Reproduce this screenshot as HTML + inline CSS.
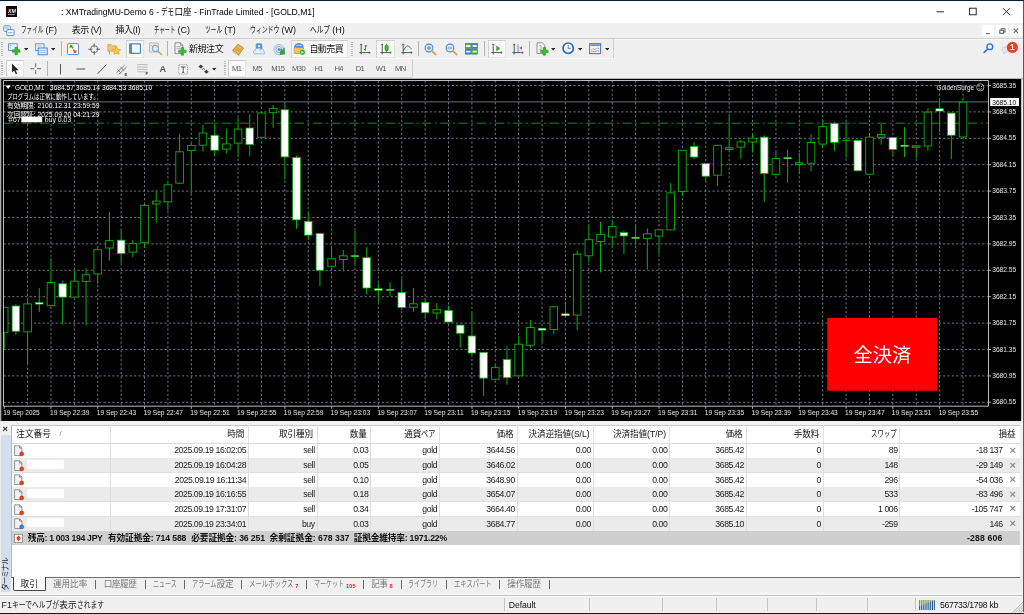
<!DOCTYPE html>
<html lang="ja"><head><meta charset="utf-8"><title>GOLD,M1</title>
<style>
html,body{margin:0;padding:0;}
body{width:1024px;height:614px;overflow:hidden;background:#f0f0f0;position:relative;font-family:"Liberation Sans","Noto Sans CJK JP",sans-serif;}
#w{position:absolute;left:0;top:0;width:1024px;height:614px;overflow:hidden;will-change:transform;}
#w>div,#w>svg,.t{position:absolute;}
.t{white-space:nowrap;}
div{box-sizing:border-box;}
</style></head>
<body>
<div id="w">
<div style="left:0px;top:0px;width:1024px;height:1.35px;background:#071a3a;"></div>
<div style="left:0px;top:1.3px;width:1024px;height:22px;background:#ffffff;"></div>
<div style="left:5.9px;top:5.9px;width:11.6px;height:11.4px;background:#0a0a0a;"></div>
<span class="t" style="top:7.56px;font-size:5.2px;line-height:7.28px;color:#f2f2f2;font-weight:bold;left:11.9px;transform:translateX(-50%);font-style:italic;">XM</span>
<div style="left:8.4px;top:14px;width:6.8px;height:0.7px;background:#8a8a8a;"></div>
<div style="left:7.6px;top:9.4px;width:1.2px;height:3.2px;background:#b01818;transform:skewX(-14deg);"></div>
<span class="t" style="top:6.28px;font-size:8.6px;line-height:12.04px;color:#000;left:61px;">: XMTradingMU-Demo 6 - <span style="display:inline-block;width:13.00px;height:12.04px;vertical-align:top;letter-spacing:0"><span style="display:inline-block;transform:scaleX(0.756);transform-origin:0 50%">デモ</span></span>口座 - FinTrade Limited - [GOLD,M1]</span>
<svg style="left:930px;top:2px" width="90" height="20" viewBox="930 2 90 20"><g stroke="#111" stroke-width="0.9" fill="none"><path d="M936.5 11.8h7.5"/><rect x="969.6" y="8.2" width="6.6" height="6.6"/><path d="M1003 8.2l7 7M1010 8.2l-7 7"/></g></svg>
<div style="left:0px;top:23.3px;width:1024px;height:14.9px;background:#f0f0f0;"></div>
<div style="left:0px;top:37.7px;width:1024px;height:0.8px;background:#d2d2d2;"></div>
<div style="left:0px;top:38.5px;width:1024px;height:0.6px;background:#f8f8f8;"></div>
<svg style="left:2.5px;top:24.6px" width="12" height="12" viewBox="0 0 12 12"><rect x="0.8" y="0.8" width="6.6" height="5.6" rx="0.8" fill="#eaf2fb" stroke="#5b8fd0" stroke-width="0.9"/><rect x="3.8" y="4.6" width="7.2" height="6" rx="0.8" fill="#f4f8fd" stroke="#4a82c8" stroke-width="0.9"/><path d="M2 3h4M5.2 7.6h4.4" stroke="#7aa5da" stroke-width="0.8"/></svg>
<span class="t" style="top:24.3px;font-size:9px;line-height:12.6px;color:#111;left:20.6px;"><span style="display:inline-block;width:22.39px;height:12.6px;vertical-align:top;letter-spacing:0"><span style="display:inline-block;transform:scaleX(0.622);transform-origin:0 50%">ファイル</span></span> (F)</span>
<span class="t" style="top:24.3px;font-size:9px;line-height:12.6px;color:#111;left:71.8px;letter-spacing:-0.517px;">表示 (V)</span>
<span class="t" style="top:24.3px;font-size:9px;line-height:12.6px;color:#111;left:115.5px;letter-spacing:-0.4px;">挿入(I)</span>
<span class="t" style="top:24.3px;font-size:9px;line-height:12.6px;color:#111;left:153.8px;"><span style="display:inline-block;width:21.28px;height:12.6px;vertical-align:top;letter-spacing:0"><span style="display:inline-block;transform:scaleX(0.591);transform-origin:0 50%">チャート</span></span> (C)</span>
<span class="t" style="top:24.3px;font-size:9px;line-height:12.6px;color:#111;left:204.5px;"><span style="display:inline-block;width:17.20px;height:12.6px;vertical-align:top;letter-spacing:0"><span style="display:inline-block;transform:scaleX(0.637);transform-origin:0 50%">ツール</span></span> (T)</span>
<span class="t" style="top:24.3px;font-size:9px;line-height:12.6px;color:#111;left:249.5px;"><span style="display:inline-block;width:29.52px;height:12.6px;vertical-align:top;letter-spacing:0"><span style="display:inline-block;transform:scaleX(0.656);transform-origin:0 50%">ウィンドウ</span></span> (W)</span>
<span class="t" style="top:24.3px;font-size:9px;line-height:12.6px;color:#111;left:309.8px;"><span style="display:inline-block;width:20.01px;height:12.6px;vertical-align:top;letter-spacing:0"><span style="display:inline-block;transform:scaleX(0.741);transform-origin:0 50%">ヘルプ</span></span> (H)</span>
<div style="left:982.2px;top:25px;width:11.6px;height:11.4px;background:#fff;"></div>
<div style="left:996.2px;top:25px;width:11.6px;height:11.4px;background:#fff;"></div>
<div style="left:1010.2px;top:25px;width:11.6px;height:11.4px;background:#fff;"></div>
<svg style="left:980px;top:24px" width="44" height="14" viewBox="980 24 44 14"><g stroke="#50607f" stroke-width="1.05" fill="none"><path d="M985.8 33.6h4"/><rect x="999.8" y="30.3" width="3.6" height="3"/><path d="M1001.2 30.3v-1.6h3.8v3.2h-1.6"/><path d="M1013.8 28.6l4.2 4.2M1018 28.6l-4.2 4.2"/></g></svg>
<div style="left:0px;top:38.8px;width:613.4px;height:19.4px;background:#f0f0f0;"></div>
<div style="left:0px;top:57.6px;width:613.4px;height:0.8px;background:#d6d6d6;"></div>
<div style="left:613px;top:38.8px;width:0.8px;height:19.4px;background:#d0d0d0;"></div>
<div style="left:0px;top:58.4px;width:613.4px;height:0.7px;background:#fafafa;"></div>
<div style="left:0px;top:76.6px;width:412px;height:0.8px;background:#d6d6d6;"></div>
<div style="left:411.6px;top:59px;width:0.8px;height:18px;background:#d0d0d0;"></div>
<div style="left:1.4px;top:41.5px;width:1.8px;height:15px;background:repeating-linear-gradient(#bdbdbd 0 1.1px,transparent 1.1px 2.2px)"></div>
<div style="left:1.4px;top:61.3px;width:1.8px;height:15px;background:repeating-linear-gradient(#bdbdbd 0 1.1px,transparent 1.1px 2.2px)"></div>
<div style="left:351.4px;top:41.5px;width:1.8px;height:15px;background:repeating-linear-gradient(#bdbdbd 0 1.1px,transparent 1.1px 2.2px)"></div>
<div style="left:223.8px;top:61.3px;width:1.8px;height:15px;background:repeating-linear-gradient(#bdbdbd 0 1.1px,transparent 1.1px 2.2px)"></div>
<div style="left:60.6px;top:41px;width:0.9px;height:15.2px;background:#b4b4b4;"></div>
<div style="left:167.1px;top:41px;width:0.9px;height:15.2px;background:#b4b4b4;"></div>
<div style="left:417.90000000000003px;top:41px;width:0.9px;height:15.2px;background:#b4b4b4;"></div>
<div style="left:484.0px;top:41px;width:0.9px;height:15.2px;background:#b4b4b4;"></div>
<div style="left:529.0px;top:41px;width:0.9px;height:15.2px;background:#b4b4b4;"></div>
<div style="left:47.2px;top:61px;width:0.9px;height:15.2px;background:#b4b4b4;"></div>
<div style="left:125.6px;top:40px;width:18.8px;height:17.6px;background:#f9fbf9;border:0.8px solid #e4e4e4;border-top-color:#cfcfcf;border-left-color:#cfcfcf"></div>
<div style="left:291px;top:40px;width:56.6px;height:17.6px;background:#f9fbf9;border:0.8px solid #e4e4e4;border-top-color:#cfcfcf;border-left-color:#cfcfcf"></div>
<div style="left:376.4px;top:40px;width:18.6px;height:17.6px;background:#f9fbf9;border:0.8px solid #e4e4e4;border-top-color:#cfcfcf;border-left-color:#cfcfcf"></div>
<div style="left:487.5px;top:40px;width:18.5px;height:17.6px;background:#f9fbf9;border:0.8px solid #e4e4e4;border-top-color:#cfcfcf;border-left-color:#cfcfcf"></div>
<div style="left:5.6px;top:59.8px;width:18.2px;height:17.6px;background:#f9fbf9;border:0.8px solid #e4e4e4;border-top-color:#cfcfcf;border-left-color:#cfcfcf"></div>
<div style="left:228px;top:59.8px;width:17.6px;height:17.6px;background:#f9fbf9;border:0.8px solid #e4e4e4;border-top-color:#cfcfcf;border-left-color:#cfcfcf"></div>
<svg style="left:23.8px;top:48.2px" width="4.4" height="2.6" viewBox="0 0 4.4 2.6"><path d="M0 0h4.4L2.2 2.6z" fill="#222"/></svg>
<svg style="left:50.8px;top:48.2px" width="4.4" height="2.6" viewBox="0 0 4.4 2.6"><path d="M0 0h4.4L2.2 2.6z" fill="#222"/></svg>
<svg style="left:550.8px;top:48.2px" width="4.4" height="2.6" viewBox="0 0 4.4 2.6"><path d="M0 0h4.4L2.2 2.6z" fill="#222"/></svg>
<svg style="left:577.8px;top:48.2px" width="4.4" height="2.6" viewBox="0 0 4.4 2.6"><path d="M0 0h4.4L2.2 2.6z" fill="#222"/></svg>
<svg style="left:604.8px;top:48.2px" width="4.4" height="2.6" viewBox="0 0 4.4 2.6"><path d="M0 0h4.4L2.2 2.6z" fill="#222"/></svg>
<svg style="left:212.20000000000002px;top:68.2px" width="4.4" height="2.6" viewBox="0 0 4.4 2.6"><path d="M0 0h4.4L2.2 2.6z" fill="#222"/></svg>
<svg style="left:8px;top:42.5px" width="14" height="14" viewBox="0 0 14 14"><rect x="0.6" y="0.8" width="8.6" height="6.6" fill="#f2f7fd" stroke="#4f86cc" stroke-width="0.9"/><path d="M1.6 2.6h2M1.6 4.6h1.4" stroke="#7aa5da" stroke-width="0.7"/><path d="M4.4 6.8h2.6v-2.6h2.4v2.6h2.6v2.4h-2.6v2.6h-2.4v-2.6h-2.6z" fill="#2fc02f" stroke="#158a15" stroke-width="0.5"/></svg>
<svg style="left:35px;top:42.5px" width="14" height="14" viewBox="0 0 14 14"><rect x="0.6" y="0.8" width="8.4" height="6.8" fill="#f2f7fd" stroke="#5f8fd0" stroke-width="0.9"/><rect x="3.2" y="5" width="9" height="6.8" fill="#e6effa" stroke="#3f78c4" stroke-width="0.9"/><path d="M1.8 3h5M4.4 7.4h6.4M4.4 9.4h6.4" stroke="#7aa5da" stroke-width="0.7"/></svg>
<svg style="left:67px;top:43px" width="12.4" height="12.4" viewBox="0 0 12.4 12.4"><rect x="0.6" y="0.6" width="11" height="11" rx="1" fill="#fff" stroke="#4a8ad8" stroke-width="1"/><path d="M4.4 2.6l2.2 2.2-1 1-2.2-2.2z" fill="#22a022"/><path d="M2.6 5.4l0.4-3.2 3.2-0.4z" fill="#22a022"/><path d="M7.8 9.4l-2.2-2.2 1-1 2.2 2.2z" fill="#e0401a"/><path d="M9.6 6.6l-0.4 3.2-3.2 0.4z" fill="#e0401a"/></svg>
<svg style="left:88px;top:43px" width="12.4" height="12.4" viewBox="0 0 12.4 12.4"><circle cx="6.2" cy="6.2" r="3.6" fill="none" stroke="#666" stroke-width="0.9"/><path d="M6.2 0.4v4M6.2 8v4M0.4 6.2h4M8 6.2h4" stroke="#555" stroke-width="0.9"/></svg>
<svg style="left:106.6px;top:42.4px" width="14.4" height="14" viewBox="0 0 14.4 14"><path d="M0.8 2.6h3.6l1 1.2h4v5.4H0.8z" fill="#f1c66a" stroke="#c8963a" stroke-width="0.6"/><path d="M2.4 9.2v3" stroke="#b98a3a" stroke-width="0.8"/><path d="M9.4 4.6l1.3 2.7 2.9 0.4-2.1 2 0.5 2.9-2.6-1.4-2.6 1.4 0.5-2.9-2.1-2 2.9-0.4z" fill="#f7cf3a" stroke="#d49a1a" stroke-width="0.6"/></svg>
<svg style="left:128.6px;top:42.8px" width="12" height="12.6" viewBox="0 0 12 12.6"><rect x="0.6" y="0.8" width="10.8" height="9.6" rx="0.8" fill="#fafcff" stroke="#3f86d8" stroke-width="1.2"/><rect x="0.6" y="0.8" width="2.4" height="9.6" fill="#4a8fdc"/><path d="M1.2 3.4h1.2M1.2 6h1.2" stroke="#e04a2a" stroke-width="0.7"/></svg>
<svg style="left:149px;top:42.4px" width="13.4" height="14" viewBox="0 0 13.4 14"><rect x="0.8" y="1" width="8.4" height="9" fill="#f6f0e4" stroke="#a8a090" stroke-width="0.7"/><path d="M2 3.2l1.6 1 1.6-1.4 1.8 1.2" stroke="#6a8fc0" stroke-width="0.6" fill="none"/><circle cx="6.4" cy="6.6" r="3.1" fill="#d8ecfb" fill-opacity="0.85" stroke="#5a9ad8" stroke-width="1"/><path d="M8.8 9l3.4 3.4" stroke="#d8a24a" stroke-width="1.6" stroke-linecap="round"/></svg>
<svg style="left:174px;top:42px" width="13" height="14.4" viewBox="0 0 13 14.4"><path d="M1 0.8h5.4l2.4 2.4v8.4H1z" fill="#f4f4f4" stroke="#777" stroke-width="0.8"/><path d="M6.4 0.8v2.4h2.4" fill="none" stroke="#777" stroke-width="0.7"/><path d="M2.4 4.6h4.4M2.4 6.4h4.4" stroke="#999" stroke-width="0.7"/><path d="M4.6 8.2h2.6v-2.6h2.4v2.6h2.6v2.4h-2.6v2.6h-2.4v-2.6h-2.6z" fill="#2fc02f" stroke="#158a15" stroke-width="0.5"/></svg>
<span class="t" style="top:42.5px;font-size:9px;line-height:12.6px;color:#111;left:189px;letter-spacing:-0.454px;">新規注文</span>
<svg style="left:232px;top:42.6px" width="12.4" height="13.4" viewBox="0 0 12.4 13.4"><path d="M0.8 7.2l5.2-6 5.6 3.8-4.6 6.6z" fill="#e8b84a" stroke="#a8741a" stroke-width="0.7"/><path d="M0.8 7.2l0.4 1.8 6 3.6-0.2-1z" fill="#fff3c8" stroke="#a8741a" stroke-width="0.5"/><path d="M3.4 6l4.2 2.6M4.6 4.6l4.2 2.6" stroke="#b8841e" stroke-width="0.6"/></svg>
<svg style="left:252.6px;top:42.6px" width="12.4" height="13.4" viewBox="0 0 12.4 13.4"><rect x="3.2" y="0.8" width="5.6" height="6.4" rx="0.8" fill="#5aa0e4" stroke="#2d6fc0" stroke-width="0.6"/><circle cx="6" cy="3" r="1.1" fill="#fff"/><path d="M4.2 6.4q1.8-2.6 3.6 0z" fill="#fff"/><path d="M1.2 10.8a2 2 0 0 1 1-3.6a2.8 2.8 0 0 1 5-0.6a2.2 2.2 0 0 1 3.6 1.8a1.4 1.4 0 0 1 0 2.6z" fill="#e4eefb" stroke="#7aa2d2" stroke-width="0.7"/></svg>
<svg style="left:272.6px;top:42.6px" width="13" height="13.4" viewBox="0 0 13 13.4"><circle cx="6" cy="6.6" r="5.2" fill="#dfeaf8" stroke="#8fb0dc" stroke-width="0.8"/><circle cx="6" cy="6.6" r="3.2" fill="none" stroke="#7aa5dc" stroke-width="0.8"/><circle cx="6" cy="6.6" r="1.3" fill="#4a86d0"/><path d="M7 11.6l1-6 1.4 2.6 1.8-3.4 0.6 6.4z" fill="#3aa63a" stroke="#1e7a1e" stroke-width="0.4"/></svg>
<svg style="left:293.4px;top:42.4px" width="13" height="14" viewBox="0 0 13 14"><path d="M1.2 5.4h9.4v6H1.2z" fill="#f0c65a" stroke="#b88a2a" stroke-width="0.7"/><path d="M1.6 5a4.3 3.6 0 0 1 8.6 0z" fill="#5a9ee0" stroke="#2d6fc0" stroke-width="0.6"/><path d="M3.2 3.6h5.4" stroke="#d6e8fa" stroke-width="0.7"/><circle cx="9.4" cy="10.2" r="2.9" fill="#22b022" stroke="#fff" stroke-width="0.5"/><path d="M8.5 8.7l2.4 1.5-2.4 1.5z" fill="#fff"/></svg>
<span class="t" style="top:42.5px;font-size:9px;line-height:12.6px;color:#111;left:309.4px;letter-spacing:-0.554px;">自動売買</span>
<svg style="left:359.4px;top:42.6px" width="12" height="13" viewBox="0 0 12 13"><path d="M2.2 1v10.4M0.4 9.6h10.8" stroke="#555" stroke-width="1"/><path d="M1 2.2l1.2-1.4 1.2 1.4M9.8 8.4l1.4 1.2-1.4 1.2" stroke="#555" stroke-width="0.7" fill="none"/><path d="M6.4 2v5.6M6.4 3h1.8M4.8 6.6h1.6" stroke="#1f9a1f" stroke-width="1"/></svg>
<svg style="left:380px;top:42.6px" width="12" height="13" viewBox="0 0 12 13"><path d="M2.2 1v10.4M0.4 9.6h10.8" stroke="#555" stroke-width="1"/><path d="M1 2.2l1.2-1.4 1.2 1.4M9.8 8.4l1.4 1.2-1.4 1.2" stroke="#555" stroke-width="0.7" fill="none"/><rect x="5" y="2.2" width="3.2" height="5.6" rx="1.2" fill="#2fc02f" stroke="#158a15" stroke-width="0.6"/><path d="M6.6 0.8v1.4M6.6 7.8v1.4" stroke="#158a15" stroke-width="0.8"/></svg>
<svg style="left:400.8px;top:42.6px" width="12" height="13" viewBox="0 0 12 13"><path d="M2.2 1v10.4M0.4 9.6h10.8" stroke="#555" stroke-width="1"/><path d="M1 2.2l1.2-1.4 1.2 1.4M9.8 8.4l1.4 1.2-1.4 1.2" stroke="#555" stroke-width="0.7" fill="none"/><path d="M2.4 7.8q3.2-6.6 5.4-4.4t3 2.6" stroke="#1f9a1f" stroke-width="1" fill="none"/></svg>
<svg style="left:424.2px;top:42.6px" width="13" height="13" viewBox="0 0 13 13"><circle cx="5" cy="5" r="3.9" fill="#dcecfb" stroke="#4a8ad8" stroke-width="1.1"/><path d="M8 8l3.6 3.6" stroke="#dba548" stroke-width="1.8" stroke-linecap="round"/><path d="M2.6 5h4.8M5 2.6v4.8" stroke="#2d6fc0" stroke-width="0.8"/></svg>
<svg style="left:444.8px;top:42.6px" width="13" height="13" viewBox="0 0 13 13"><circle cx="5" cy="5" r="3.9" fill="#dcecfb" stroke="#4a8ad8" stroke-width="1.1"/><path d="M8 8l3.6 3.6" stroke="#dba548" stroke-width="1.8" stroke-linecap="round"/><path d="M2.6 5h4.8" stroke="#2d6fc0" stroke-width="0.8"/></svg>
<svg style="left:464.8px;top:43.4px" width="13" height="11.6" viewBox="0 0 13 11.6"><rect x="0.4" y="0.4" width="5.8" height="5" fill="#5aa63a" stroke="#3d7f22" stroke-width="0.5"/><rect x="6.8" y="0.4" width="5.8" height="5" fill="#3f7fd0" stroke="#2d5fa8" stroke-width="0.5"/><rect x="0.4" y="6" width="5.8" height="5.2" fill="#3f7fd0" stroke="#2d5fa8" stroke-width="0.5"/><rect x="6.8" y="6" width="5.8" height="5.2" fill="#5aa63a" stroke="#3d7f22" stroke-width="0.5"/><path d="M1.2 3h4.2M7.6 3h4.2M1.2 8.6h4.2M7.6 8.6h4.2" stroke="#e8f0fa" stroke-width="1.8"/></svg>
<svg style="left:491.4px;top:42.6px" width="12" height="13" viewBox="0 0 12 13"><path d="M2.2 1v10.4M0.4 9.6h10.8" stroke="#555" stroke-width="1"/><path d="M1 2.2l1.2-1.4 1.2 1.4M9.8 8.4l1.4 1.2-1.4 1.2" stroke="#555" stroke-width="0.7" fill="none"/><path d="M5.6 3l3.4 2.4-3.4 2.4z" fill="#3ab03a" stroke="#1e8a1e" stroke-width="0.5"/></svg>
<svg style="left:512.2px;top:42.6px" width="12" height="13" viewBox="0 0 12 13"><path d="M2.2 1v10.4M0.4 9.6h10.8" stroke="#555" stroke-width="1"/><path d="M1 2.2l1.2-1.4 1.2 1.4M9.8 8.4l1.4 1.2-1.4 1.2" stroke="#555" stroke-width="0.7" fill="none"/><path d="M6 1.4v8" stroke="#3f7fd0" stroke-width="0.9"/><path d="M10 3.2l-2.6 1.8 2.6 1.8z" fill="#e0502a"/></svg>
<svg style="left:536.2px;top:42px" width="13" height="14.4" viewBox="0 0 13 14.4"><path d="M1 0.8h5.4l2.4 2.4v8.4H1z" fill="#f4f4f4" stroke="#777" stroke-width="0.8"/><path d="M3 4.4c1-2 2-1 2 1.400s-0.600 3-1.400 2" stroke="#777" stroke-width="0.7" fill="none"/><path d="M4.6 8.2h2.6v-2.6h2.4v2.6h2.6v2.4h-2.6v2.6h-2.4v-2.6h-2.6z" fill="#2fc02f" stroke="#158a15" stroke-width="0.5"/></svg>
<svg style="left:562.4px;top:42.4px" width="12.6" height="12.6" viewBox="0 0 12.6 12.6"><circle cx="6.2" cy="6.2" r="5.2" fill="#f6faff" stroke="#2a68c0" stroke-width="1.7"/><path d="M6.2 3v3.4h2.6" stroke="#555" stroke-width="0.8" fill="none"/></svg>
<svg style="left:589.4px;top:43.2px" width="12.4" height="11.6" viewBox="0 0 12.4 11.6"><rect x="0.6" y="0.6" width="11" height="10" fill="#f2f6fc" stroke="#3f7fd0" stroke-width="1.1"/><path d="M1.4 2.2h9.4" stroke="#3f7fd0" stroke-width="1.4"/><path d="M2 7.4l2-1.600 2 1 2.200-2 2 1" stroke="#d8902a" stroke-width="0.7" fill="none"/><path d="M2 9l2-0.600 2 0.400 2.200-1 2 0.400" stroke="#4aa04a" stroke-width="0.7" fill="none"/></svg>
<svg style="left:983px;top:43.4px" width="11" height="10.4" viewBox="0 0 11 10.4"><circle cx="6.8" cy="3.8" r="2.9" fill="#e8f1fc" stroke="#2f6fd0" stroke-width="1.4"/><path d="M4.6 6l-3.4 3.400" stroke="#2f6fd0" stroke-width="1.7" stroke-linecap="round"/></svg>
<svg style="left:1000px;top:41px" width="20" height="15" viewBox="0 0 20 15"><path d="M2 8.400a3.600 2.800 0 1 1 4.400 2.800l-2.800 1.800 0.600-2a3.600 2.800 0 0 1-2.200-2.600z" fill="#e6e6e6" stroke="#bdbdbd" stroke-width="0.6"/><circle cx="12.4" cy="6.400" r="5.600" fill="#e8401c"/><text x="12.400" y="9.400" font-size="8.400" font-weight="bold" fill="#fff" text-anchor="middle" font-family="Liberation Sans,sans-serif">1</text></svg>
<svg style="left:10.6px;top:63px" width="8" height="12" viewBox="0 0 8 12"><path d="M1 0.600v9l2.200-2 1.600 3.600 1.400-0.600-1.600-3.400h3z" fill="#222"/></svg>
<svg style="left:29.8px;top:63.4px" width="11.4" height="11.4" viewBox="0 0 11.4 11.4"><path d="M5.700 0.400v3.800M5.700 7.200v3.800M0.400 5.700h3.800M7.200 5.700h3.800" stroke="#555" stroke-width="0.9"/></svg>
<svg style="left:59px;top:63.6px" width="3" height="11" viewBox="0 0 3 11"><path d="M1.500 0v10.400" stroke="#555" stroke-width="1"/></svg>
<svg style="left:76px;top:68px" width="10" height="2" viewBox="0 0 10 2"><path d="M0.400 1h8.800" stroke="#555" stroke-width="1"/></svg>
<svg style="left:96.6px;top:63.8px" width="10" height="10.4" viewBox="0 0 10 10.4"><path d="M0.600 9.800l8.800-9.200" stroke="#555" stroke-width="1"/></svg>
<svg style="left:116px;top:62.6px" width="12" height="13.4" viewBox="0 0 12 13.4"><path d="M0.600 9.600l8-7.400M2.600 11.400l8-7.400M1.600 6.400l3.600 4M4.400 3.800l3.600 4" stroke="#666" stroke-width="0.8"/><text x="8.6" y="13" font-size="4.200" fill="#333" font-weight="bold" font-family="Liberation Sans,sans-serif">E</text></svg>
<svg style="left:136.6px;top:63.4px" width="12" height="12.6" viewBox="0 0 12 12.6"><path d="M0.400 1.600h10.400M0.400 4h10.400M0.400 6.400h10.400M0.400 8.800h10.400" stroke="#8a8a8a" stroke-width="0.8" stroke-dasharray="1.300 0.700"/><text x="8.400" y="12.400" font-size="4.200" fill="#333" font-weight="bold" font-family="Liberation Sans,sans-serif">F</text></svg>
<span class="t" style="top:62.56px;font-size:9.2px;line-height:12.88px;color:#555;font-weight:bold;left:162.8px;transform:translateX(-50%);">A</span>
<svg style="left:178.4px;top:63.6px" width="10.4" height="11" viewBox="0 0 10.4 11"><rect x="0.800" y="0.800" width="8.600" height="9.200" fill="#fbfbfb" stroke="#777" stroke-width="0.700" stroke-dasharray="1.200 0.600"/><path d="M2.800 3h4.800M5.200 3v5.400M4.200 8.400h2" stroke="#444" stroke-width="0.900"/></svg>
<svg style="left:198.4px;top:64px" width="11.4" height="10.6" viewBox="0 0 11.4 10.6"><path d="M2.800 0.400l2.400 2-2.400 2-2.400-2z" fill="#444"/><path d="M8.400 5.800l2.400 2-2.400 2-2.400-2z" fill="#444"/><path d="M3.600 4.600l1.200 1 0.800-1.200 1.400 1.200" stroke="#444" stroke-width="0.800" fill="none"/></svg>
<span class="t" style="top:63.88px;font-size:7.6px;line-height:10.64px;color:#555;left:231.9px;letter-spacing:-0.581px;">M1</span>
<span class="t" style="top:63.88px;font-size:7.6px;line-height:10.64px;color:#555;left:252.5px;letter-spacing:-0.581px;">M5</span>
<span class="t" style="top:63.88px;font-size:7.6px;line-height:10.64px;color:#555;left:271.25px;letter-spacing:-0.527px;">M15</span>
<span class="t" style="top:63.88px;font-size:7.6px;line-height:10.64px;color:#555;left:291.9px;letter-spacing:-0.527px;">M30</span>
<span class="t" style="top:63.88px;font-size:7.6px;line-height:10.64px;color:#555;left:314.6px;letter-spacing:-0.759px;">H1</span>
<span class="t" style="top:63.88px;font-size:7.6px;line-height:10.64px;color:#555;left:334.4px;letter-spacing:-0.559px;">H4</span>
<span class="t" style="top:63.88px;font-size:7.6px;line-height:10.64px;color:#555;left:355.7px;letter-spacing:-0.759px;">D1</span>
<span class="t" style="top:63.88px;font-size:7.6px;line-height:10.64px;color:#555;left:375.75px;letter-spacing:-0.695px;">W1</span>
<span class="t" style="top:63.88px;font-size:7.6px;line-height:10.64px;color:#555;left:394.9px;letter-spacing:-0.356px;">MN</span>
<svg style="left:0;top:78px" width="1024" height="344" viewBox="0 78 1024 344" font-family='"Liberation Sans","Noto Sans CJK JP",sans-serif'><rect x="0" y="78" width="1024" height="344" fill="#f0f0f0"/><rect x="0" y="78.3" width="1024" height="1" fill="#9a9a9a"/><rect x="1.4" y="79" width="1019.8" height="342.3" fill="#000"/><rect x="0" y="79" width="1.4" height="342.3" fill="#a8a8a8"/><path d="M3.5 85.50H988.5M3.5 111.90H988.5M3.5 138.30H988.5M3.5 164.70H988.5M3.5 191.10H988.5M3.5 217.50H988.5M3.5 243.90H988.5M3.5 270.30H988.5M3.5 296.70H988.5M3.5 323.10H988.5M3.5 349.50H988.5M3.5 375.90H988.5M3.5 402.30H988.5M27.59 80.5V406M50.97 80.5V406M74.36 80.5V406M97.74 80.5V406M121.13 80.5V406M144.52 80.5V406M167.90 80.5V406M191.29 80.5V406M214.67 80.5V406M238.06 80.5V406M261.45 80.5V406M284.83 80.5V406M308.22 80.5V406M331.60 80.5V406M354.99 80.5V406M378.38 80.5V406M401.76 80.5V406M425.15 80.5V406M448.53 80.5V406M471.92 80.5V406M495.31 80.5V406M518.69 80.5V406M542.08 80.5V406M565.46 80.5V406M588.85 80.5V406M612.24 80.5V406M635.62 80.5V406M659.01 80.5V406M682.39 80.5V406M705.78 80.5V406M729.17 80.5V406M752.55 80.5V406M775.94 80.5V406M799.32 80.5V406M822.71 80.5V406M846.10 80.5V406M869.48 80.5V406M892.87 80.5V406M916.25 80.5V406M939.64 80.5V406M963.03 80.5V406" stroke="#78838f" stroke-width="0.9" stroke-dasharray="2.25 2.1" fill="none"/><path d="M3.5 101.9H988.5" stroke="#66707c" stroke-width="1"/><path d="M3.5 123.2H988.5" stroke="#1c8f1c" stroke-width="0.95" stroke-dasharray="9.4 3.4 2 3.4"/><path d="M4.20 306.90V348.90" stroke="#000" stroke-width="2"/><path d="M4.20 306.90V348.90" stroke="#0ab40a" stroke-width="1"/><rect x="0.40" y="307.30" width="7.6" height="24.90" fill="#000" stroke="#0ab40a" stroke-width="0.9"/><path d="M15.89 304.30V334.90" stroke="#000" stroke-width="2"/><path d="M15.89 304.30V334.90" stroke="#0ab40a" stroke-width="1"/><rect x="12.09" y="306.00" width="7.6" height="25.20" fill="#fff" stroke="#0ab40a" stroke-width="0.8"/><path d="M27.59 300.30V364.20" stroke="#000" stroke-width="2"/><path d="M27.59 300.30V364.20" stroke="#0ab40a" stroke-width="1"/><rect x="23.79" y="303.90" width="7.6" height="28.00" fill="#000" stroke="#0ab40a" stroke-width="0.9"/><path d="M39.28 288.10V312.00" stroke="#000" stroke-width="2"/><path d="M39.28 288.10V312.00" stroke="#0ab40a" stroke-width="1"/><rect x="35.48" y="302.50" width="7.6" height="1.60" fill="#f4fff4" stroke="#0ab40a" stroke-width="0.6"/><path d="M50.97 258.10V306.10" stroke="#000" stroke-width="2"/><path d="M50.97 258.10V306.10" stroke="#0ab40a" stroke-width="1"/><rect x="47.17" y="282.50" width="7.6" height="23.20" fill="#000" stroke="#0ab40a" stroke-width="0.9"/><path d="M62.66 280.60V324.50" stroke="#000" stroke-width="2"/><path d="M62.66 280.60V324.50" stroke="#0ab40a" stroke-width="1"/><rect x="58.87" y="283.80" width="7.6" height="13.30" fill="#fff" stroke="#0ab40a" stroke-width="0.8"/><path d="M74.36 270.00V298.40" stroke="#000" stroke-width="2"/><path d="M74.36 270.00V298.40" stroke="#0ab40a" stroke-width="1"/><rect x="70.56" y="281.20" width="7.6" height="15.90" fill="#000" stroke="#0ab40a" stroke-width="0.9"/><path d="M86.05 268.40V325.40" stroke="#000" stroke-width="2"/><path d="M86.05 268.40V325.40" stroke="#0ab40a" stroke-width="1"/><rect x="82.25" y="274.80" width="7.6" height="6.60" fill="#000" stroke="#0ab40a" stroke-width="0.9"/><path d="M97.74 247.30V283.80" stroke="#000" stroke-width="2"/><path d="M97.74 247.30V283.80" stroke="#0ab40a" stroke-width="1"/><rect x="93.94" y="249.70" width="7.6" height="24.30" fill="#000" stroke="#0ab40a" stroke-width="0.9"/><path d="M109.44 212.20V260.60" stroke="#000" stroke-width="2"/><path d="M109.44 212.20V260.60" stroke="#0ab40a" stroke-width="1"/><rect x="105.64" y="240.70" width="7.6" height="7.30" fill="#000" stroke="#0ab40a" stroke-width="0.9"/><path d="M121.13 229.00V262.80" stroke="#000" stroke-width="2"/><path d="M121.13 229.00V262.80" stroke="#0ab40a" stroke-width="1"/><rect x="117.33" y="240.15" width="7.6" height="13.45" fill="#fff" stroke="#0ab40a" stroke-width="0.8"/><path d="M132.82 239.75V257.20" stroke="#000" stroke-width="2"/><path d="M132.82 239.75V257.20" stroke="#0ab40a" stroke-width="1"/><rect x="129.02" y="243.70" width="7.6" height="8.40" fill="#000" stroke="#0ab40a" stroke-width="0.9"/><path d="M144.52 203.75V247.80" stroke="#000" stroke-width="2"/><path d="M144.52 203.75V247.80" stroke="#0ab40a" stroke-width="1"/><rect x="140.72" y="205.40" width="7.6" height="37.30" fill="#000" stroke="#0ab40a" stroke-width="0.9"/><path d="M156.21 190.00V222.50" stroke="#000" stroke-width="2"/><path d="M156.21 190.00V222.50" stroke="#0ab40a" stroke-width="1"/><rect x="152.41" y="201.10" width="7.6" height="2.90" fill="#000" stroke="#0ab40a" stroke-width="0.9"/><path d="M167.90 181.60V210.60" stroke="#000" stroke-width="2"/><path d="M167.90 181.60V210.60" stroke="#0ab40a" stroke-width="1"/><rect x="164.10" y="184.80" width="7.6" height="17.00" fill="#000" stroke="#0ab40a" stroke-width="0.9"/><path d="M179.59 133.75V183.60" stroke="#000" stroke-width="2"/><path d="M179.59 133.75V183.60" stroke="#0ab40a" stroke-width="1"/><rect x="175.79" y="151.80" width="7.6" height="31.40" fill="#000" stroke="#0ab40a" stroke-width="0.9"/><path d="M191.29 142.75V195.25" stroke="#000" stroke-width="2"/><path d="M191.29 142.75V195.25" stroke="#0ab40a" stroke-width="1"/><rect x="187.49" y="145.40" width="7.6" height="5.20" fill="#000" stroke="#0ab40a" stroke-width="0.9"/><path d="M202.98 125.00V151.60" stroke="#000" stroke-width="2"/><path d="M202.98 125.00V151.60" stroke="#0ab40a" stroke-width="1"/><rect x="199.18" y="133.00" width="7.6" height="12.20" fill="#000" stroke="#0ab40a" stroke-width="0.9"/><path d="M214.67 122.90V155.30" stroke="#000" stroke-width="2"/><path d="M214.67 122.90V155.30" stroke="#0ab40a" stroke-width="1"/><rect x="210.87" y="135.30" width="7.6" height="14.90" fill="#fff" stroke="#0ab40a" stroke-width="0.8"/><path d="M226.37 128.50V153.40" stroke="#000" stroke-width="2"/><path d="M226.37 128.50V153.40" stroke="#0ab40a" stroke-width="1"/><rect x="222.57" y="143.90" width="7.6" height="5.20" fill="#000" stroke="#0ab40a" stroke-width="0.9"/><path d="M238.06 117.80V157.60" stroke="#000" stroke-width="2"/><path d="M238.06 117.80V157.60" stroke="#0ab40a" stroke-width="1"/><rect x="234.26" y="129.10" width="7.6" height="14.00" fill="#000" stroke="#0ab40a" stroke-width="0.9"/><path d="M249.75 114.00V156.25" stroke="#000" stroke-width="2"/><path d="M249.75 114.00V156.25" stroke="#0ab40a" stroke-width="1"/><rect x="245.95" y="128.00" width="7.6" height="16.60" fill="#fff" stroke="#0ab40a" stroke-width="0.8"/><path d="M261.45 111.25V139.40" stroke="#000" stroke-width="2"/><path d="M261.45 111.25V139.40" stroke="#0ab40a" stroke-width="1"/><rect x="257.65" y="113.00" width="7.6" height="24.30" fill="#000" stroke="#0ab40a" stroke-width="0.9"/><path d="M273.14 105.25V127.75" stroke="#000" stroke-width="2"/><path d="M273.14 105.25V127.75" stroke="#0ab40a" stroke-width="1"/><rect x="269.34" y="108.65" width="7.6" height="4.05" fill="#000" stroke="#0ab40a" stroke-width="0.9"/><path d="M284.83 104.10V179.50" stroke="#000" stroke-width="2"/><path d="M284.83 104.10V179.50" stroke="#0ab40a" stroke-width="1"/><rect x="281.03" y="109.80" width="7.6" height="47.10" fill="#fff" stroke="#0ab40a" stroke-width="0.8"/><path d="M296.52 155.60V228.75" stroke="#000" stroke-width="2"/><path d="M296.52 155.60V228.75" stroke="#0ab40a" stroke-width="1"/><rect x="292.72" y="157.50" width="7.6" height="62.40" fill="#fff" stroke="#0ab40a" stroke-width="0.8"/><path d="M308.22 211.90V240.00" stroke="#000" stroke-width="2"/><path d="M308.22 211.90V240.00" stroke="#0ab40a" stroke-width="1"/><rect x="304.42" y="221.30" width="7.6" height="13.80" fill="#fff" stroke="#0ab40a" stroke-width="0.8"/><path d="M319.91 233.20V286.30" stroke="#000" stroke-width="2"/><path d="M319.91 233.20V286.30" stroke="#0ab40a" stroke-width="1"/><rect x="316.11" y="233.60" width="7.6" height="36.60" fill="#fff" stroke="#0ab40a" stroke-width="0.8"/><path d="M331.60 247.90V266.60" stroke="#000" stroke-width="2"/><path d="M331.60 247.90V266.60" stroke="#0ab40a" stroke-width="1"/><rect x="327.80" y="258.70" width="7.6" height="7.50" fill="#000" stroke="#0ab40a" stroke-width="0.9"/><path d="M343.30 250.00V271.50" stroke="#000" stroke-width="2"/><path d="M343.30 250.00V271.50" stroke="#0ab40a" stroke-width="1"/><rect x="339.50" y="255.80" width="7.6" height="3.60" fill="#000" stroke="#0ab40a" stroke-width="0.9"/><path d="M354.99 230.60V265.90" stroke="#000" stroke-width="2"/><path d="M354.99 230.60V265.90" stroke="#0ab40a" stroke-width="1"/><rect x="351.19" y="255.50" width="7.6" height="1.20" fill="#f4fff4" stroke="#0ab40a" stroke-width="0.6"/><path d="M366.68 247.00V294.40" stroke="#000" stroke-width="2"/><path d="M366.68 247.00V294.40" stroke="#0ab40a" stroke-width="1"/><rect x="362.88" y="257.70" width="7.6" height="30.30" fill="#fff" stroke="#0ab40a" stroke-width="0.8"/><path d="M378.38 283.50V302.25" stroke="#000" stroke-width="2"/><path d="M378.38 283.50V302.25" stroke="#0ab40a" stroke-width="1"/><rect x="374.58" y="288.70" width="7.6" height="1.60" fill="#f4fff4" stroke="#0ab40a" stroke-width="0.6"/><path d="M390.07 282.20V295.90" stroke="#000" stroke-width="2"/><path d="M390.07 282.20V295.90" stroke="#0ab40a" stroke-width="1"/><rect x="386.27" y="289.30" width="7.6" height="1.20" fill="#f4fff4" stroke="#0ab40a" stroke-width="0.6"/><path d="M401.76 278.80V309.75" stroke="#000" stroke-width="2"/><path d="M401.76 278.80V309.75" stroke="#0ab40a" stroke-width="1"/><rect x="397.96" y="292.40" width="7.6" height="15.10" fill="#fff" stroke="#0ab40a" stroke-width="0.8"/><path d="M413.45 288.20V311.80" stroke="#000" stroke-width="2"/><path d="M413.45 288.20V311.80" stroke="#0ab40a" stroke-width="1"/><rect x="409.65" y="303.80" width="7.6" height="3.50" fill="#000" stroke="#0ab40a" stroke-width="0.9"/><path d="M425.15 299.00V318.90" stroke="#000" stroke-width="2"/><path d="M425.15 299.00V318.90" stroke="#0ab40a" stroke-width="1"/><rect x="421.35" y="302.40" width="7.6" height="10.30" fill="#fff" stroke="#0ab40a" stroke-width="0.8"/><path d="M436.84 303.10V319.30" stroke="#000" stroke-width="2"/><path d="M436.84 303.10V319.30" stroke="#0ab40a" stroke-width="1"/><rect x="433.04" y="309.70" width="7.6" height="3.30" fill="#000" stroke="#0ab40a" stroke-width="0.9"/><path d="M448.53 305.80V322.40" stroke="#000" stroke-width="2"/><path d="M448.53 305.80V322.40" stroke="#0ab40a" stroke-width="1"/><rect x="444.73" y="310.40" width="7.6" height="11.60" fill="#fff" stroke="#0ab40a" stroke-width="0.8"/><path d="M460.23 324.70V347.60" stroke="#000" stroke-width="2"/><path d="M460.23 324.70V347.60" stroke="#0ab40a" stroke-width="1"/><rect x="456.43" y="325.10" width="7.6" height="8.20" fill="#fff" stroke="#0ab40a" stroke-width="0.8"/><path d="M471.92 312.10V355.60" stroke="#000" stroke-width="2"/><path d="M471.92 312.10V355.60" stroke="#0ab40a" stroke-width="1"/><rect x="468.12" y="336.00" width="7.6" height="17.00" fill="#fff" stroke="#0ab40a" stroke-width="0.8"/><path d="M483.61 351.90V396.00" stroke="#000" stroke-width="2"/><path d="M483.61 351.90V396.00" stroke="#0ab40a" stroke-width="1"/><rect x="479.81" y="352.30" width="7.6" height="25.80" fill="#fff" stroke="#0ab40a" stroke-width="0.8"/><path d="M495.31 364.00V380.60" stroke="#000" stroke-width="2"/><path d="M495.31 364.00V380.60" stroke="#0ab40a" stroke-width="1"/><rect x="491.51" y="367.65" width="7.6" height="11.55" fill="#000" stroke="#0ab40a" stroke-width="0.9"/><path d="M507.00 346.25V384.70" stroke="#000" stroke-width="2"/><path d="M507.00 346.25V384.70" stroke="#0ab40a" stroke-width="1"/><rect x="503.20" y="359.40" width="7.6" height="18.30" fill="#fff" stroke="#0ab40a" stroke-width="0.8"/><path d="M518.69 335.40V376.25" stroke="#000" stroke-width="2"/><path d="M518.69 335.40V376.25" stroke="#0ab40a" stroke-width="1"/><rect x="514.89" y="344.20" width="7.6" height="31.65" fill="#000" stroke="#0ab40a" stroke-width="0.9"/><path d="M530.38 320.00V347.60" stroke="#000" stroke-width="2"/><path d="M530.38 320.00V347.60" stroke="#0ab40a" stroke-width="1"/><rect x="526.59" y="327.50" width="7.6" height="17.80" fill="#000" stroke="#0ab40a" stroke-width="0.9"/><path d="M542.08 327.90V342.90" stroke="#000" stroke-width="2"/><path d="M542.08 327.90V342.90" stroke="#0ab40a" stroke-width="1"/><rect x="538.28" y="328.20" width="7.6" height="2.00" fill="#f4fff4" stroke="#0ab40a" stroke-width="0.6"/><path d="M553.77 306.40V334.00" stroke="#000" stroke-width="2"/><path d="M553.77 306.40V334.00" stroke="#0ab40a" stroke-width="1"/><rect x="549.97" y="306.80" width="7.6" height="22.80" fill="#000" stroke="#0ab40a" stroke-width="0.9"/><path d="M565.46 301.60V317.50" stroke="#000" stroke-width="2"/><path d="M565.46 301.60V317.50" stroke="#0ab40a" stroke-width="1"/><rect x="561.66" y="313.80" width="7.6" height="2.00" fill="#f4fff4" stroke="#0ab40a" stroke-width="0.6"/><path d="M577.16 250.60V330.30" stroke="#000" stroke-width="2"/><path d="M577.16 250.60V330.30" stroke="#0ab40a" stroke-width="1"/><rect x="573.36" y="254.15" width="7.6" height="60.95" fill="#000" stroke="#0ab40a" stroke-width="0.9"/><path d="M588.85 225.25V262.20" stroke="#000" stroke-width="2"/><path d="M588.85 225.25V262.20" stroke="#0ab40a" stroke-width="1"/><rect x="585.05" y="239.70" width="7.6" height="16.10" fill="#000" stroke="#0ab40a" stroke-width="0.9"/><path d="M600.54 221.90V272.50" stroke="#000" stroke-width="2"/><path d="M600.54 221.90V272.50" stroke="#0ab40a" stroke-width="1"/><rect x="596.74" y="234.40" width="7.6" height="7.30" fill="#000" stroke="#0ab40a" stroke-width="0.9"/><path d="M612.24 220.00V245.90" stroke="#000" stroke-width="2"/><path d="M612.24 220.00V245.90" stroke="#0ab40a" stroke-width="1"/><rect x="608.44" y="226.60" width="7.6" height="10.40" fill="#000" stroke="#0ab40a" stroke-width="0.9"/><path d="M623.93 230.90V254.10" stroke="#000" stroke-width="2"/><path d="M623.93 230.90V254.10" stroke="#0ab40a" stroke-width="1"/><rect x="620.13" y="232.60" width="7.6" height="3.30" fill="#fff" stroke="#0ab40a" stroke-width="0.8"/><path d="M635.62 224.70V245.30" stroke="#000" stroke-width="2"/><path d="M635.62 224.70V245.30" stroke="#0ab40a" stroke-width="1"/><rect x="631.82" y="237.20" width="7.6" height="1.25" fill="#f4fff4" stroke="#0ab40a" stroke-width="0.6"/><path d="M647.32 228.40V269.70" stroke="#000" stroke-width="2"/><path d="M647.32 228.40V269.70" stroke="#0ab40a" stroke-width="1"/><rect x="643.52" y="233.90" width="7.6" height="4.45" fill="#000" stroke="#0ab40a" stroke-width="0.9"/><path d="M659.01 229.40V254.10" stroke="#000" stroke-width="2"/><path d="M659.01 229.40V254.10" stroke="#0ab40a" stroke-width="1"/><rect x="655.21" y="229.80" width="7.6" height="6.30" fill="#000" stroke="#0ab40a" stroke-width="0.9"/><path d="M670.70 183.10V230.30" stroke="#000" stroke-width="2"/><path d="M670.70 183.10V230.30" stroke="#0ab40a" stroke-width="1"/><rect x="666.90" y="192.90" width="7.6" height="37.00" fill="#000" stroke="#0ab40a" stroke-width="0.9"/><path d="M682.39 149.90V196.25" stroke="#000" stroke-width="2"/><path d="M682.39 149.90V196.25" stroke="#0ab40a" stroke-width="1"/><rect x="678.59" y="150.30" width="7.6" height="41.20" fill="#000" stroke="#0ab40a" stroke-width="0.9"/><path d="M694.09 142.25V159.10" stroke="#000" stroke-width="2"/><path d="M694.09 142.25V159.10" stroke="#0ab40a" stroke-width="1"/><rect x="690.29" y="146.60" width="7.6" height="10.40" fill="#fff" stroke="#0ab40a" stroke-width="0.8"/><path d="M705.78 163.10V182.75" stroke="#000" stroke-width="2"/><path d="M705.78 163.10V182.75" stroke="#0ab40a" stroke-width="1"/><rect x="701.98" y="163.50" width="7.6" height="12.70" fill="#fff" stroke="#0ab40a" stroke-width="0.8"/><path d="M717.47 144.90V185.90" stroke="#000" stroke-width="2"/><path d="M717.47 144.90V185.90" stroke="#0ab40a" stroke-width="1"/><rect x="713.67" y="145.30" width="7.6" height="29.90" fill="#000" stroke="#0ab40a" stroke-width="0.9"/><path d="M729.17 114.10V149.75" stroke="#000" stroke-width="2"/><path d="M729.17 114.10V149.75" stroke="#0ab40a" stroke-width="1"/><rect x="725.37" y="147.80" width="7.6" height="1.65" fill="#063006" stroke="#0ab40a" stroke-width="0.9"/><path d="M740.86 140.00V158.75" stroke="#000" stroke-width="2"/><path d="M740.86 140.00V158.75" stroke="#0ab40a" stroke-width="1"/><rect x="737.06" y="141.90" width="7.6" height="5.20" fill="#000" stroke="#0ab40a" stroke-width="0.9"/><path d="M752.55 133.40V152.60" stroke="#000" stroke-width="2"/><path d="M752.55 133.40V152.60" stroke="#0ab40a" stroke-width="1"/><rect x="748.75" y="138.15" width="7.6" height="3.85" fill="#000" stroke="#0ab40a" stroke-width="0.9"/><path d="M764.25 135.30V201.90" stroke="#000" stroke-width="2"/><path d="M764.25 135.30V201.90" stroke="#0ab40a" stroke-width="1"/><rect x="760.45" y="137.20" width="7.6" height="36.15" fill="#fff" stroke="#0ab40a" stroke-width="0.8"/><path d="M775.94 150.30V174.70" stroke="#000" stroke-width="2"/><path d="M775.94 150.30V174.70" stroke="#0ab40a" stroke-width="1"/><rect x="772.14" y="158.60" width="7.6" height="15.70" fill="#000" stroke="#0ab40a" stroke-width="0.9"/><path d="M787.63 149.75V182.75" stroke="#000" stroke-width="2"/><path d="M787.63 149.75V182.75" stroke="#0ab40a" stroke-width="1"/><rect x="783.83" y="157.55" width="7.6" height="1.25" fill="#f4fff4" stroke="#0ab40a" stroke-width="0.6"/><path d="M799.32 152.75V174.10" stroke="#000" stroke-width="2"/><path d="M799.32 152.75V174.10" stroke="#0ab40a" stroke-width="1"/><rect x="795.52" y="162.80" width="7.6" height="1.65" fill="#063006" stroke="#0ab40a" stroke-width="0.9"/><path d="M811.02 134.30V171.50" stroke="#000" stroke-width="2"/><path d="M811.02 134.30V171.50" stroke="#0ab40a" stroke-width="1"/><rect x="807.22" y="142.50" width="7.6" height="20.70" fill="#000" stroke="#0ab40a" stroke-width="0.9"/><path d="M822.71 119.10V148.00" stroke="#000" stroke-width="2"/><path d="M822.71 119.10V148.00" stroke="#0ab40a" stroke-width="1"/><rect x="818.91" y="126.65" width="7.6" height="17.45" fill="#000" stroke="#0ab40a" stroke-width="0.9"/><path d="M834.40 122.00V151.10" stroke="#000" stroke-width="2"/><path d="M834.40 122.00V151.10" stroke="#0ab40a" stroke-width="1"/><rect x="830.60" y="123.40" width="7.6" height="18.95" fill="#fff" stroke="#0ab40a" stroke-width="0.8"/><path d="M846.10 120.75V157.70" stroke="#000" stroke-width="2"/><path d="M846.10 120.75V157.70" stroke="#0ab40a" stroke-width="1"/><path d="M842.10 140.40H850.10" stroke="#0ab40a" stroke-width="0.9"/><path d="M857.79 139.90V171.20" stroke="#000" stroke-width="2"/><path d="M857.79 139.90V171.20" stroke="#0ab40a" stroke-width="1"/><rect x="853.99" y="140.30" width="7.6" height="30.50" fill="#fff" stroke="#0ab40a" stroke-width="0.8"/><path d="M869.48 132.40V174.60" stroke="#000" stroke-width="2"/><path d="M869.48 132.40V174.60" stroke="#0ab40a" stroke-width="1"/><rect x="865.68" y="137.10" width="7.6" height="37.10" fill="#000" stroke="#0ab40a" stroke-width="0.9"/><path d="M881.18 123.00V144.60" stroke="#000" stroke-width="2"/><path d="M881.18 123.00V144.60" stroke="#0ab40a" stroke-width="1"/><rect x="877.38" y="134.55" width="7.6" height="2.75" fill="#063006" stroke="#0ab40a" stroke-width="0.9"/><path d="M892.87 137.00V156.75" stroke="#000" stroke-width="2"/><path d="M892.87 137.00V156.75" stroke="#0ab40a" stroke-width="1"/><rect x="889.07" y="137.40" width="7.6" height="12.00" fill="#fff" stroke="#0ab40a" stroke-width="0.8"/><path d="M904.56 127.10V157.10" stroke="#000" stroke-width="2"/><path d="M904.56 127.10V157.10" stroke="#0ab40a" stroke-width="1"/><rect x="900.76" y="145.20" width="7.6" height="1.30" fill="#f4fff4" stroke="#0ab40a" stroke-width="0.6"/><path d="M916.25 145.50V158.25" stroke="#000" stroke-width="2"/><path d="M916.25 145.50V158.25" stroke="#0ab40a" stroke-width="1"/><rect x="912.45" y="145.80" width="7.6" height="1.50" fill="#063006" stroke="#0ab40a" stroke-width="0.9"/><path d="M927.95 108.00V151.10" stroke="#000" stroke-width="2"/><path d="M927.95 108.00V151.10" stroke="#0ab40a" stroke-width="1"/><rect x="924.15" y="112.15" width="7.6" height="33.85" fill="#000" stroke="#0ab40a" stroke-width="0.9"/><path d="M939.64 98.00V132.00" stroke="#000" stroke-width="2"/><path d="M939.64 98.00V132.00" stroke="#0ab40a" stroke-width="1"/><rect x="935.84" y="108.70" width="7.6" height="2.40" fill="#f4fff4" stroke="#0ab40a" stroke-width="0.6"/><path d="M951.33 112.70V159.20" stroke="#000" stroke-width="2"/><path d="M951.33 112.70V159.20" stroke="#0ab40a" stroke-width="1"/><rect x="947.53" y="113.10" width="7.6" height="22.10" fill="#fff" stroke="#0ab40a" stroke-width="0.8"/><path d="M963.03 98.25V139.50" stroke="#000" stroke-width="2"/><path d="M963.03 98.25V139.50" stroke="#0ab40a" stroke-width="1"/><rect x="959.23" y="102.20" width="7.6" height="34.80" fill="#000" stroke="#0ab40a" stroke-width="0.9"/><rect x="0" y="79" width="1.4" height="342.3" fill="#a8a8a8"/><rect x="1.4" y="79" width="1.7" height="342" fill="#000"/><path d="M3.5 80.5H988.5M3.5 80.5V406.2M3.5 406.2H988.5M988.5 80.5V406.2" stroke="#d0d0d0" stroke-width="0.9" fill="none"/><path d="M988.5 85.50h2.6" stroke="#d0d0d0" stroke-width="0.8"/><text x="992.2" y="87.60" font-size="7.7" fill="#e8e8e8" textLength="24" lengthAdjust="spacingAndGlyphs">3685.35</text><path d="M988.5 111.90h2.6" stroke="#d0d0d0" stroke-width="0.8"/><text x="992.2" y="114.00" font-size="7.7" fill="#e8e8e8" textLength="24" lengthAdjust="spacingAndGlyphs">3684.95</text><path d="M988.5 138.30h2.6" stroke="#d0d0d0" stroke-width="0.8"/><text x="992.2" y="140.40" font-size="7.7" fill="#e8e8e8" textLength="24" lengthAdjust="spacingAndGlyphs">3684.55</text><path d="M988.5 164.70h2.6" stroke="#d0d0d0" stroke-width="0.8"/><text x="992.2" y="166.80" font-size="7.7" fill="#e8e8e8" textLength="24" lengthAdjust="spacingAndGlyphs">3684.15</text><path d="M988.5 191.10h2.6" stroke="#d0d0d0" stroke-width="0.8"/><text x="992.2" y="193.20" font-size="7.7" fill="#e8e8e8" textLength="24" lengthAdjust="spacingAndGlyphs">3683.75</text><path d="M988.5 217.50h2.6" stroke="#d0d0d0" stroke-width="0.8"/><text x="992.2" y="219.60" font-size="7.7" fill="#e8e8e8" textLength="24" lengthAdjust="spacingAndGlyphs">3683.35</text><path d="M988.5 243.90h2.6" stroke="#d0d0d0" stroke-width="0.8"/><text x="992.2" y="246.00" font-size="7.7" fill="#e8e8e8" textLength="24" lengthAdjust="spacingAndGlyphs">3682.95</text><path d="M988.5 270.30h2.6" stroke="#d0d0d0" stroke-width="0.8"/><text x="992.2" y="272.40" font-size="7.7" fill="#e8e8e8" textLength="24" lengthAdjust="spacingAndGlyphs">3682.55</text><path d="M988.5 296.70h2.6" stroke="#d0d0d0" stroke-width="0.8"/><text x="992.2" y="298.80" font-size="7.7" fill="#e8e8e8" textLength="24" lengthAdjust="spacingAndGlyphs">3682.15</text><path d="M988.5 323.10h2.6" stroke="#d0d0d0" stroke-width="0.8"/><text x="992.2" y="325.20" font-size="7.7" fill="#e8e8e8" textLength="24" lengthAdjust="spacingAndGlyphs">3681.75</text><path d="M988.5 349.50h2.6" stroke="#d0d0d0" stroke-width="0.8"/><text x="992.2" y="351.60" font-size="7.7" fill="#e8e8e8" textLength="24" lengthAdjust="spacingAndGlyphs">3681.35</text><path d="M988.5 375.90h2.6" stroke="#d0d0d0" stroke-width="0.8"/><text x="992.2" y="378.00" font-size="7.7" fill="#e8e8e8" textLength="24" lengthAdjust="spacingAndGlyphs">3680.95</text><path d="M988.5 402.30h2.6" stroke="#d0d0d0" stroke-width="0.8"/><text x="992.2" y="404.40" font-size="7.7" fill="#e8e8e8" textLength="24" lengthAdjust="spacingAndGlyphs">3680.55</text><rect x="990.2" y="98" width="28.8" height="8" fill="#fff"/><text x="992.2" y="104.8" font-size="7.7" fill="#000" textLength="24" lengthAdjust="spacingAndGlyphs">3685.10</text><path d="M4.20 406.2v2.6" stroke="#d0d0d0" stroke-width="0.8"/> <text x="3.20" y="415.1" font-size="7.7" fill="#e8e8e8" textLength="36.5" lengthAdjust="spacingAndGlyphs">19 Sep 2025</text><path d="M50.97 406.2v2.6" stroke="#d0d0d0" stroke-width="0.8"/> <text x="49.97" y="415.1" font-size="7.7" fill="#e8e8e8" textLength="39.5" lengthAdjust="spacingAndGlyphs">19 Sep 22:39</text><path d="M97.74 406.2v2.6" stroke="#d0d0d0" stroke-width="0.8"/> <text x="96.74" y="415.1" font-size="7.7" fill="#e8e8e8" textLength="39.5" lengthAdjust="spacingAndGlyphs">19 Sep 22:43</text><path d="M144.52 406.2v2.6" stroke="#d0d0d0" stroke-width="0.8"/> <text x="143.52" y="415.1" font-size="7.7" fill="#e8e8e8" textLength="39.5" lengthAdjust="spacingAndGlyphs">19 Sep 22:47</text><path d="M191.29 406.2v2.6" stroke="#d0d0d0" stroke-width="0.8"/> <text x="190.29" y="415.1" font-size="7.7" fill="#e8e8e8" textLength="39.5" lengthAdjust="spacingAndGlyphs">19 Sep 22:51</text><path d="M238.06 406.2v2.6" stroke="#d0d0d0" stroke-width="0.8"/> <text x="237.06" y="415.1" font-size="7.7" fill="#e8e8e8" textLength="39.5" lengthAdjust="spacingAndGlyphs">19 Sep 22:55</text><path d="M284.83 406.2v2.6" stroke="#d0d0d0" stroke-width="0.8"/> <text x="283.83" y="415.1" font-size="7.7" fill="#e8e8e8" textLength="39.5" lengthAdjust="spacingAndGlyphs">19 Sep 22:59</text><path d="M331.60 406.2v2.6" stroke="#d0d0d0" stroke-width="0.8"/> <text x="330.60" y="415.1" font-size="7.7" fill="#e8e8e8" textLength="39.5" lengthAdjust="spacingAndGlyphs">19 Sep 23:03</text><path d="M378.38 406.2v2.6" stroke="#d0d0d0" stroke-width="0.8"/> <text x="377.38" y="415.1" font-size="7.7" fill="#e8e8e8" textLength="39.5" lengthAdjust="spacingAndGlyphs">19 Sep 23:07</text><path d="M425.15 406.2v2.6" stroke="#d0d0d0" stroke-width="0.8"/> <text x="424.15" y="415.1" font-size="7.7" fill="#e8e8e8" textLength="39.5" lengthAdjust="spacingAndGlyphs">19 Sep 23:11</text><path d="M471.92 406.2v2.6" stroke="#d0d0d0" stroke-width="0.8"/> <text x="470.92" y="415.1" font-size="7.7" fill="#e8e8e8" textLength="39.5" lengthAdjust="spacingAndGlyphs">19 Sep 23:15</text><path d="M518.69 406.2v2.6" stroke="#d0d0d0" stroke-width="0.8"/> <text x="517.69" y="415.1" font-size="7.7" fill="#e8e8e8" textLength="39.5" lengthAdjust="spacingAndGlyphs">19 Sep 23:19</text><path d="M565.46 406.2v2.6" stroke="#d0d0d0" stroke-width="0.8"/> <text x="564.46" y="415.1" font-size="7.7" fill="#e8e8e8" textLength="39.5" lengthAdjust="spacingAndGlyphs">19 Sep 23:23</text><path d="M612.24 406.2v2.6" stroke="#d0d0d0" stroke-width="0.8"/> <text x="611.24" y="415.1" font-size="7.7" fill="#e8e8e8" textLength="39.5" lengthAdjust="spacingAndGlyphs">19 Sep 23:27</text><path d="M659.01 406.2v2.6" stroke="#d0d0d0" stroke-width="0.8"/> <text x="658.01" y="415.1" font-size="7.7" fill="#e8e8e8" textLength="39.5" lengthAdjust="spacingAndGlyphs">19 Sep 23:31</text><path d="M705.78 406.2v2.6" stroke="#d0d0d0" stroke-width="0.8"/> <text x="704.78" y="415.1" font-size="7.7" fill="#e8e8e8" textLength="39.5" lengthAdjust="spacingAndGlyphs">19 Sep 23:35</text><path d="M752.55 406.2v2.6" stroke="#d0d0d0" stroke-width="0.8"/> <text x="751.55" y="415.1" font-size="7.7" fill="#e8e8e8" textLength="39.5" lengthAdjust="spacingAndGlyphs">19 Sep 23:39</text><path d="M799.32 406.2v2.6" stroke="#d0d0d0" stroke-width="0.8"/> <text x="798.32" y="415.1" font-size="7.7" fill="#e8e8e8" textLength="39.5" lengthAdjust="spacingAndGlyphs">19 Sep 23:43</text><path d="M846.10 406.2v2.6" stroke="#d0d0d0" stroke-width="0.8"/> <text x="845.10" y="415.1" font-size="7.7" fill="#e8e8e8" textLength="39.5" lengthAdjust="spacingAndGlyphs">19 Sep 23:47</text><path d="M892.87 406.2v2.6" stroke="#d0d0d0" stroke-width="0.8"/> <text x="891.87" y="415.1" font-size="7.7" fill="#e8e8e8" textLength="39.5" lengthAdjust="spacingAndGlyphs">19 Sep 23:51</text><path d="M939.64 406.2v2.6" stroke="#d0d0d0" stroke-width="0.8"/> <text x="938.64" y="415.1" font-size="7.7" fill="#e8e8e8" textLength="39.5" lengthAdjust="spacingAndGlyphs">19 Sep 23:55</text><path d="M5.5 85.6h5.3l-2.65 3.3z" fill="#fff"/><text x="15" y="89.5" font-size="7.6" fill="#fff" textLength="29.3" lengthAdjust="spacingAndGlyphs">GOLD,M1</text><text x="49.8" y="89.5" font-size="7.6" fill="#fff" textLength="102.4" lengthAdjust="spacingAndGlyphs">3684.57 3685.14 3684.53 3685.10</text><text x="6.9" y="99.2" font-size="7" fill="#fff" textLength="92" lengthAdjust="spacingAndGlyphs">プログラムは正常に動作しています。</text><text x="6.9" y="107.8" font-size="7.3" fill="#fff" textLength="92.5" lengthAdjust="spacingAndGlyphs">有効期限: 2100.12.31 23:59:59</text><text x="6.9" y="116.5" font-size="7.3" fill="#fff" textLength="92.5" lengthAdjust="spacingAndGlyphs">次回認証: 2025.09.20 04:21:29</text><text x="8.6" y="121.8" font-size="7.3" fill="#e6e6e6" textLength="12.4" lengthAdjust="spacingAndGlyphs">#67</text><rect x="21.3" y="116.6" width="20.9" height="5.7" fill="#fff"/><text x="44.7" y="121.8" font-size="7.3" fill="#e6e6e6" textLength="26.6" lengthAdjust="spacingAndGlyphs">buy 0.03</text><text x="936.5" y="90" font-size="7.7" fill="#eee" textLength="37.5" lengthAdjust="spacingAndGlyphs">GoldenSurge</text><g stroke="#ddd" stroke-width="0.7" fill="none"><circle cx="980.3" cy="87.3" r="3.6"/><path d="M978.6 88.6q1.7 1.5 3.4 0"/></g><circle cx="979" cy="86.3" r="0.55" fill="#ddd"/><circle cx="981.6" cy="86.3" r="0.55" fill="#ddd"/><rect x="827.3" y="317.9" width="109.9" height="72.9" fill="#fe0000"/><text x="882.4" y="361.6" font-size="19.2" fill="#fff" text-anchor="middle">全決済</text></svg>
<div style="left:0px;top:421.3px;width:1024px;height:3.8px;background:#f0f0f0;"></div>
<div style="left:0px;top:425px;width:11px;height:168px;background:#f0f0f0;"></div>
<div style="left:1px;top:435px;width:9.9px;height:157px;background:#d3dfee;"></div>
<span class="t" style="top:423.46px;font-size:9.2px;line-height:12.88px;color:#222;font-weight:bold;left:5.3px;transform:translateX(-50%);">×</span>
<span class="t" style="left:-13.6px;top:570.4px;width:38px;height:9px;font-size:7.6px;line-height:9px;color:#222;transform:rotate(-90deg);transform-origin:center;text-align:center;letter-spacing:-1.1px">ターミナル</span>
<div style="left:11px;top:425px;width:1009px;height:152px;background:#ffffff;"></div>
<div style="left:11px;top:424.6px;width:1009px;height:0.8px;background:#c8c8c8;"></div>
<div style="left:11px;top:442.8px;width:1009px;height:0.8px;background:#dcdcdc;"></div>
<div style="left:109.6px;top:425.4px;width:0.9px;height:17.4px;background:#e2e2e2;"></div>
<div style="left:247.85px;top:425.4px;width:0.9px;height:17.4px;background:#e2e2e2;"></div>
<div style="left:316.6px;top:425.4px;width:0.9px;height:17.4px;background:#e2e2e2;"></div>
<div style="left:369.6px;top:425.4px;width:0.9px;height:17.4px;background:#e2e2e2;"></div>
<div style="left:438.85px;top:425.4px;width:0.9px;height:17.4px;background:#e2e2e2;"></div>
<div style="left:516.6px;top:425.4px;width:0.9px;height:17.4px;background:#e2e2e2;"></div>
<div style="left:592.6px;top:425.4px;width:0.9px;height:17.4px;background:#e2e2e2;"></div>
<div style="left:669.1px;top:425.4px;width:0.9px;height:17.4px;background:#e2e2e2;"></div>
<div style="left:745.6px;top:425.4px;width:0.9px;height:17.4px;background:#e2e2e2;"></div>
<div style="left:822.6px;top:425.4px;width:0.9px;height:17.4px;background:#e2e2e2;"></div>
<div style="left:899.35px;top:425.4px;width:0.9px;height:17.4px;background:#e2e2e2;"></div>
<span class="t" style="top:428.28px;font-size:8.6px;line-height:12.04px;color:#111;left:16.3px;letter-spacing:0.027px;">注文番号</span>
<span class="t" style="top:429.28px;font-size:7.6px;line-height:10.64px;color:#7a7a7a;left:59.4px;">/</span>
<span class="t" style="top:428.28px;font-size:8.6px;line-height:12.04px;color:#111;right:779.7px;letter-spacing:-0.102px;margin-right:0.102px;">時間</span>
<span class="t" style="top:428.28px;font-size:8.6px;line-height:12.04px;color:#111;right:711px;letter-spacing:-0.098px;margin-right:0.098px;">取引種別</span>
<span class="t" style="top:428.28px;font-size:8.6px;line-height:12.04px;color:#111;right:657.25px;letter-spacing:-0.102px;margin-right:0.102px;">数量</span>
<span class="t" style="top:428.28px;font-size:8.6px;line-height:12.04px;color:#111;right:588.25px;">通貨<span style="display:inline-block;width:14.31px;height:12.04px;vertical-align:top;letter-spacing:0"><span style="display:inline-block;transform:scaleX(0.832);transform-origin:0 50%">ペア</span></span></span>
<span class="t" style="top:428.28px;font-size:8.6px;line-height:12.04px;color:#111;right:510.5px;letter-spacing:-0.102px;margin-right:0.102px;">価格</span>
<span class="t" style="top:428.28px;font-size:8.6px;line-height:12.04px;color:#111;right:434.5px;letter-spacing:-0.059px;margin-right:0.059px;">決済逆指値(S/L)</span>
<span class="t" style="top:428.28px;font-size:8.6px;line-height:12.04px;color:#111;right:358px;letter-spacing:-0.052px;margin-right:0.052px;">決済指値(T/P)</span>
<span class="t" style="top:428.28px;font-size:8.6px;line-height:12.04px;color:#111;right:281.5px;letter-spacing:-0.102px;margin-right:0.102px;">価格</span>
<span class="t" style="top:428.28px;font-size:8.6px;line-height:12.04px;color:#111;right:204.75px;letter-spacing:-0.099px;margin-right:0.099px;">手数料</span>
<span class="t" style="top:428.28px;font-size:8.6px;line-height:12.04px;color:#111;right:127.25px;"><span style="display:inline-block;width:25.77px;height:12.04px;vertical-align:top;letter-spacing:0"><span style="display:inline-block;transform:scaleX(0.749);transform-origin:0 50%">スワップ</span></span></span>
<span class="t" style="top:428.28px;font-size:8.6px;line-height:12.04px;color:#111;right:8.5px;letter-spacing:-0.227px;margin-right:0.227px;">損益</span>
<div style="left:11px;top:457.53px;width:1009px;height:0.8px;background:#e0e0e0;"></div>
<div style="left:109.6px;top:443.4px;width:0.9px;height:14.63px;background:#dedede;"></div>
<div style="left:247.85px;top:443.4px;width:0.9px;height:14.63px;background:#dedede;"></div>
<div style="left:316.6px;top:443.4px;width:0.9px;height:14.63px;background:#dedede;"></div>
<div style="left:369.6px;top:443.4px;width:0.9px;height:14.63px;background:#dedede;"></div>
<div style="left:438.85px;top:443.4px;width:0.9px;height:14.63px;background:#dedede;"></div>
<div style="left:516.6px;top:443.4px;width:0.9px;height:14.63px;background:#dedede;"></div>
<div style="left:592.6px;top:443.4px;width:0.9px;height:14.63px;background:#dedede;"></div>
<div style="left:669.1px;top:443.4px;width:0.9px;height:14.63px;background:#dedede;"></div>
<div style="left:745.6px;top:443.4px;width:0.9px;height:14.63px;background:#dedede;"></div>
<div style="left:822.6px;top:443.4px;width:0.9px;height:14.63px;background:#dedede;"></div>
<div style="left:899.35px;top:443.4px;width:0.9px;height:14.63px;background:#dedede;"></div>
<span class="t" style="top:444.42px;font-size:8.7px;line-height:12.18px;color:#1a1a1a;right:777.95px;letter-spacing:-0.41px;">2025.09.19 16:02:05</span>
<span class="t" style="top:444.42px;font-size:8.7px;line-height:12.18px;color:#1a1a1a;right:709.35px;letter-spacing:-0.41px;">sell</span>
<span class="t" style="top:444.42px;font-size:8.7px;line-height:12.18px;color:#1a1a1a;right:655.6px;letter-spacing:-0.41px;">0.03</span>
<span class="t" style="top:444.42px;font-size:8.7px;line-height:12.18px;color:#1a1a1a;right:586.85px;letter-spacing:-0.41px;">gold</span>
<span class="t" style="top:444.42px;font-size:8.7px;line-height:12.18px;color:#1a1a1a;right:509.1px;letter-spacing:-0.41px;">3644.56</span>
<span class="t" style="top:444.42px;font-size:8.7px;line-height:12.18px;color:#1a1a1a;right:433.1px;letter-spacing:-0.41px;">0.00</span>
<span class="t" style="top:444.42px;font-size:8.7px;line-height:12.18px;color:#1a1a1a;right:356.6px;letter-spacing:-0.41px;">0.00</span>
<span class="t" style="top:444.42px;font-size:8.7px;line-height:12.18px;color:#1a1a1a;right:280.1px;letter-spacing:-0.41px;">3685.42</span>
<span class="t" style="top:444.42px;font-size:8.7px;line-height:12.18px;color:#1a1a1a;right:203.1px;letter-spacing:-0.41px;">0</span>
<span class="t" style="top:444.42px;font-size:8.7px;line-height:12.18px;color:#1a1a1a;right:126.35px;letter-spacing:-0.41px;">89</span>
<span class="t" style="top:444.42px;font-size:8.7px;line-height:12.18px;color:#1a1a1a;right:21.35px;letter-spacing:-0.41px;">-18 137</span>
<span class="t" style="top:442.92px;font-size:11px;line-height:15.4px;color:#8e8e8e;font-weight:bold;left:1012.7px;transform:translateX(-50%);">×</span>
<svg style="left:12.5px;top:445.00px" width="12" height="12" viewBox="0 0 12 12"><path d="M1.6 0.8h5l2.3 2.3v7.4H1.6z" fill="#f4f4f4" stroke="#7c7c7c" stroke-width="0.8"/><path d="M6.6 0.8v2.3h2.3" fill="none" stroke="#6a6a6a" stroke-width="0.7"/><circle cx="8.7" cy="8.9" r="2.15" fill="#e8401c" stroke="#802010" stroke-width="0.3"/></svg>
<div style="left:11px;top:458.03px;width:1009px;height:14.63px;background:#ebebeb;"></div>
<div style="left:11px;top:472.16px;width:1009px;height:0.8px;background:#e0e0e0;"></div>
<div style="left:109.6px;top:458.03px;width:0.9px;height:14.63px;background:#dedede;"></div>
<div style="left:247.85px;top:458.03px;width:0.9px;height:14.63px;background:#dedede;"></div>
<div style="left:316.6px;top:458.03px;width:0.9px;height:14.63px;background:#dedede;"></div>
<div style="left:369.6px;top:458.03px;width:0.9px;height:14.63px;background:#dedede;"></div>
<div style="left:438.85px;top:458.03px;width:0.9px;height:14.63px;background:#dedede;"></div>
<div style="left:516.6px;top:458.03px;width:0.9px;height:14.63px;background:#dedede;"></div>
<div style="left:592.6px;top:458.03px;width:0.9px;height:14.63px;background:#dedede;"></div>
<div style="left:669.1px;top:458.03px;width:0.9px;height:14.63px;background:#dedede;"></div>
<div style="left:745.6px;top:458.03px;width:0.9px;height:14.63px;background:#dedede;"></div>
<div style="left:822.6px;top:458.03px;width:0.9px;height:14.63px;background:#dedede;"></div>
<div style="left:899.35px;top:458.03px;width:0.9px;height:14.63px;background:#dedede;"></div>
<span class="t" style="top:459.05px;font-size:8.7px;line-height:12.18px;color:#1a1a1a;right:777.95px;letter-spacing:-0.41px;">2025.09.19 16:04:28</span>
<span class="t" style="top:459.05px;font-size:8.7px;line-height:12.18px;color:#1a1a1a;right:709.35px;letter-spacing:-0.41px;">sell</span>
<span class="t" style="top:459.05px;font-size:8.7px;line-height:12.18px;color:#1a1a1a;right:655.6px;letter-spacing:-0.41px;">0.05</span>
<span class="t" style="top:459.05px;font-size:8.7px;line-height:12.18px;color:#1a1a1a;right:586.85px;letter-spacing:-0.41px;">gold</span>
<span class="t" style="top:459.05px;font-size:8.7px;line-height:12.18px;color:#1a1a1a;right:509.1px;letter-spacing:-0.41px;">3646.02</span>
<span class="t" style="top:459.05px;font-size:8.7px;line-height:12.18px;color:#1a1a1a;right:433.1px;letter-spacing:-0.41px;">0.00</span>
<span class="t" style="top:459.05px;font-size:8.7px;line-height:12.18px;color:#1a1a1a;right:356.6px;letter-spacing:-0.41px;">0.00</span>
<span class="t" style="top:459.05px;font-size:8.7px;line-height:12.18px;color:#1a1a1a;right:280.1px;letter-spacing:-0.41px;">3685.42</span>
<span class="t" style="top:459.05px;font-size:8.7px;line-height:12.18px;color:#1a1a1a;right:203.1px;letter-spacing:-0.41px;">0</span>
<span class="t" style="top:459.05px;font-size:8.7px;line-height:12.18px;color:#1a1a1a;right:126.35px;letter-spacing:-0.41px;">148</span>
<span class="t" style="top:459.05px;font-size:8.7px;line-height:12.18px;color:#1a1a1a;right:21.35px;letter-spacing:-0.41px;">-29 149</span>
<span class="t" style="top:457.55px;font-size:11px;line-height:15.4px;color:#8e8e8e;font-weight:bold;left:1012.7px;transform:translateX(-50%);">×</span>
<svg style="left:12.5px;top:459.63px" width="12" height="12" viewBox="0 0 12 12"><path d="M1.6 0.8h5l2.3 2.3v7.4H1.6z" fill="#f4f4f4" stroke="#7c7c7c" stroke-width="0.8"/><path d="M6.6 0.8v2.3h2.3" fill="none" stroke="#6a6a6a" stroke-width="0.7"/><circle cx="8.7" cy="8.9" r="2.15" fill="#e8401c" stroke="#802010" stroke-width="0.3"/></svg>
<div style="left:27.2px;top:459.93px;width:36.8px;height:8.6px;background:#fefefe;border-radius:1.5px;"></div>
<div style="left:11px;top:486.79px;width:1009px;height:0.8px;background:#e0e0e0;"></div>
<div style="left:109.6px;top:472.66px;width:0.9px;height:14.63px;background:#dedede;"></div>
<div style="left:247.85px;top:472.66px;width:0.9px;height:14.63px;background:#dedede;"></div>
<div style="left:316.6px;top:472.66px;width:0.9px;height:14.63px;background:#dedede;"></div>
<div style="left:369.6px;top:472.66px;width:0.9px;height:14.63px;background:#dedede;"></div>
<div style="left:438.85px;top:472.66px;width:0.9px;height:14.63px;background:#dedede;"></div>
<div style="left:516.6px;top:472.66px;width:0.9px;height:14.63px;background:#dedede;"></div>
<div style="left:592.6px;top:472.66px;width:0.9px;height:14.63px;background:#dedede;"></div>
<div style="left:669.1px;top:472.66px;width:0.9px;height:14.63px;background:#dedede;"></div>
<div style="left:745.6px;top:472.66px;width:0.9px;height:14.63px;background:#dedede;"></div>
<div style="left:822.6px;top:472.66px;width:0.9px;height:14.63px;background:#dedede;"></div>
<div style="left:899.35px;top:472.66px;width:0.9px;height:14.63px;background:#dedede;"></div>
<span class="t" style="top:473.68px;font-size:8.7px;line-height:12.18px;color:#1a1a1a;right:777.95px;letter-spacing:-0.41px;">2025.09.19 16:11:34</span>
<span class="t" style="top:473.68px;font-size:8.7px;line-height:12.18px;color:#1a1a1a;right:709.35px;letter-spacing:-0.41px;">sell</span>
<span class="t" style="top:473.68px;font-size:8.7px;line-height:12.18px;color:#1a1a1a;right:655.6px;letter-spacing:-0.41px;">0.10</span>
<span class="t" style="top:473.68px;font-size:8.7px;line-height:12.18px;color:#1a1a1a;right:586.85px;letter-spacing:-0.41px;">gold</span>
<span class="t" style="top:473.68px;font-size:8.7px;line-height:12.18px;color:#1a1a1a;right:509.1px;letter-spacing:-0.41px;">3648.90</span>
<span class="t" style="top:473.68px;font-size:8.7px;line-height:12.18px;color:#1a1a1a;right:433.1px;letter-spacing:-0.41px;">0.00</span>
<span class="t" style="top:473.68px;font-size:8.7px;line-height:12.18px;color:#1a1a1a;right:356.6px;letter-spacing:-0.41px;">0.00</span>
<span class="t" style="top:473.68px;font-size:8.7px;line-height:12.18px;color:#1a1a1a;right:280.1px;letter-spacing:-0.41px;">3685.42</span>
<span class="t" style="top:473.68px;font-size:8.7px;line-height:12.18px;color:#1a1a1a;right:203.1px;letter-spacing:-0.41px;">0</span>
<span class="t" style="top:473.68px;font-size:8.7px;line-height:12.18px;color:#1a1a1a;right:126.35px;letter-spacing:-0.41px;">296</span>
<span class="t" style="top:473.68px;font-size:8.7px;line-height:12.18px;color:#1a1a1a;right:21.35px;letter-spacing:-0.41px;">-54 036</span>
<span class="t" style="top:472.18px;font-size:11px;line-height:15.4px;color:#8e8e8e;font-weight:bold;left:1012.7px;transform:translateX(-50%);">×</span>
<svg style="left:12.5px;top:474.26px" width="12" height="12" viewBox="0 0 12 12"><path d="M1.6 0.8h5l2.3 2.3v7.4H1.6z" fill="#f4f4f4" stroke="#7c7c7c" stroke-width="0.8"/><path d="M6.6 0.8v2.3h2.3" fill="none" stroke="#6a6a6a" stroke-width="0.7"/><circle cx="8.7" cy="8.9" r="2.15" fill="#e8401c" stroke="#802010" stroke-width="0.3"/></svg>
<div style="left:11px;top:487.29px;width:1009px;height:14.63px;background:#ebebeb;"></div>
<div style="left:11px;top:501.42px;width:1009px;height:0.8px;background:#e0e0e0;"></div>
<div style="left:109.6px;top:487.29px;width:0.9px;height:14.63px;background:#dedede;"></div>
<div style="left:247.85px;top:487.29px;width:0.9px;height:14.63px;background:#dedede;"></div>
<div style="left:316.6px;top:487.29px;width:0.9px;height:14.63px;background:#dedede;"></div>
<div style="left:369.6px;top:487.29px;width:0.9px;height:14.63px;background:#dedede;"></div>
<div style="left:438.85px;top:487.29px;width:0.9px;height:14.63px;background:#dedede;"></div>
<div style="left:516.6px;top:487.29px;width:0.9px;height:14.63px;background:#dedede;"></div>
<div style="left:592.6px;top:487.29px;width:0.9px;height:14.63px;background:#dedede;"></div>
<div style="left:669.1px;top:487.29px;width:0.9px;height:14.63px;background:#dedede;"></div>
<div style="left:745.6px;top:487.29px;width:0.9px;height:14.63px;background:#dedede;"></div>
<div style="left:822.6px;top:487.29px;width:0.9px;height:14.63px;background:#dedede;"></div>
<div style="left:899.35px;top:487.29px;width:0.9px;height:14.63px;background:#dedede;"></div>
<span class="t" style="top:488.31px;font-size:8.7px;line-height:12.18px;color:#1a1a1a;right:777.95px;letter-spacing:-0.41px;">2025.09.19 16:16:55</span>
<span class="t" style="top:488.31px;font-size:8.7px;line-height:12.18px;color:#1a1a1a;right:709.35px;letter-spacing:-0.41px;">sell</span>
<span class="t" style="top:488.31px;font-size:8.7px;line-height:12.18px;color:#1a1a1a;right:655.6px;letter-spacing:-0.41px;">0.18</span>
<span class="t" style="top:488.31px;font-size:8.7px;line-height:12.18px;color:#1a1a1a;right:586.85px;letter-spacing:-0.41px;">gold</span>
<span class="t" style="top:488.31px;font-size:8.7px;line-height:12.18px;color:#1a1a1a;right:509.1px;letter-spacing:-0.41px;">3654.07</span>
<span class="t" style="top:488.31px;font-size:8.7px;line-height:12.18px;color:#1a1a1a;right:433.1px;letter-spacing:-0.41px;">0.00</span>
<span class="t" style="top:488.31px;font-size:8.7px;line-height:12.18px;color:#1a1a1a;right:356.6px;letter-spacing:-0.41px;">0.00</span>
<span class="t" style="top:488.31px;font-size:8.7px;line-height:12.18px;color:#1a1a1a;right:280.1px;letter-spacing:-0.41px;">3685.42</span>
<span class="t" style="top:488.31px;font-size:8.7px;line-height:12.18px;color:#1a1a1a;right:203.1px;letter-spacing:-0.41px;">0</span>
<span class="t" style="top:488.31px;font-size:8.7px;line-height:12.18px;color:#1a1a1a;right:126.35px;letter-spacing:-0.41px;">533</span>
<span class="t" style="top:488.31px;font-size:8.7px;line-height:12.18px;color:#1a1a1a;right:21.35px;letter-spacing:-0.41px;">-83 496</span>
<span class="t" style="top:486.8px;font-size:11px;line-height:15.4px;color:#8e8e8e;font-weight:bold;left:1012.7px;transform:translateX(-50%);">×</span>
<svg style="left:12.5px;top:488.89px" width="12" height="12" viewBox="0 0 12 12"><path d="M1.6 0.8h5l2.3 2.3v7.4H1.6z" fill="#f4f4f4" stroke="#7c7c7c" stroke-width="0.8"/><path d="M6.6 0.8v2.3h2.3" fill="none" stroke="#6a6a6a" stroke-width="0.7"/><circle cx="8.7" cy="8.9" r="2.15" fill="#e8401c" stroke="#802010" stroke-width="0.3"/></svg>
<div style="left:27.2px;top:489.19px;width:36.8px;height:8.6px;background:#fefefe;border-radius:1.5px;"></div>
<div style="left:11px;top:516.05px;width:1009px;height:0.8px;background:#e0e0e0;"></div>
<div style="left:109.6px;top:501.92px;width:0.9px;height:14.63px;background:#dedede;"></div>
<div style="left:247.85px;top:501.92px;width:0.9px;height:14.63px;background:#dedede;"></div>
<div style="left:316.6px;top:501.92px;width:0.9px;height:14.63px;background:#dedede;"></div>
<div style="left:369.6px;top:501.92px;width:0.9px;height:14.63px;background:#dedede;"></div>
<div style="left:438.85px;top:501.92px;width:0.9px;height:14.63px;background:#dedede;"></div>
<div style="left:516.6px;top:501.92px;width:0.9px;height:14.63px;background:#dedede;"></div>
<div style="left:592.6px;top:501.92px;width:0.9px;height:14.63px;background:#dedede;"></div>
<div style="left:669.1px;top:501.92px;width:0.9px;height:14.63px;background:#dedede;"></div>
<div style="left:745.6px;top:501.92px;width:0.9px;height:14.63px;background:#dedede;"></div>
<div style="left:822.6px;top:501.92px;width:0.9px;height:14.63px;background:#dedede;"></div>
<div style="left:899.35px;top:501.92px;width:0.9px;height:14.63px;background:#dedede;"></div>
<span class="t" style="top:502.94px;font-size:8.7px;line-height:12.18px;color:#1a1a1a;right:777.95px;letter-spacing:-0.41px;">2025.09.19 17:31:07</span>
<span class="t" style="top:502.94px;font-size:8.7px;line-height:12.18px;color:#1a1a1a;right:709.35px;letter-spacing:-0.41px;">sell</span>
<span class="t" style="top:502.94px;font-size:8.7px;line-height:12.18px;color:#1a1a1a;right:655.6px;letter-spacing:-0.41px;">0.34</span>
<span class="t" style="top:502.94px;font-size:8.7px;line-height:12.18px;color:#1a1a1a;right:586.85px;letter-spacing:-0.41px;">gold</span>
<span class="t" style="top:502.94px;font-size:8.7px;line-height:12.18px;color:#1a1a1a;right:509.1px;letter-spacing:-0.41px;">3664.40</span>
<span class="t" style="top:502.94px;font-size:8.7px;line-height:12.18px;color:#1a1a1a;right:433.1px;letter-spacing:-0.41px;">0.00</span>
<span class="t" style="top:502.94px;font-size:8.7px;line-height:12.18px;color:#1a1a1a;right:356.6px;letter-spacing:-0.41px;">0.00</span>
<span class="t" style="top:502.94px;font-size:8.7px;line-height:12.18px;color:#1a1a1a;right:280.1px;letter-spacing:-0.41px;">3685.42</span>
<span class="t" style="top:502.94px;font-size:8.7px;line-height:12.18px;color:#1a1a1a;right:203.1px;letter-spacing:-0.41px;">0</span>
<span class="t" style="top:502.94px;font-size:8.7px;line-height:12.18px;color:#1a1a1a;right:126.35px;letter-spacing:-0.41px;">1 006</span>
<span class="t" style="top:502.94px;font-size:8.7px;line-height:12.18px;color:#1a1a1a;right:21.35px;letter-spacing:-0.41px;">-105 747</span>
<span class="t" style="top:501.43px;font-size:11px;line-height:15.4px;color:#8e8e8e;font-weight:bold;left:1012.7px;transform:translateX(-50%);">×</span>
<svg style="left:12.5px;top:503.52px" width="12" height="12" viewBox="0 0 12 12"><path d="M1.6 0.8h5l2.3 2.3v7.4H1.6z" fill="#f4f4f4" stroke="#7c7c7c" stroke-width="0.8"/><path d="M6.6 0.8v2.3h2.3" fill="none" stroke="#6a6a6a" stroke-width="0.7"/><circle cx="8.7" cy="8.9" r="2.15" fill="#e8401c" stroke="#802010" stroke-width="0.3"/></svg>
<div style="left:11px;top:516.55px;width:1009px;height:14.63px;background:#ebebeb;"></div>
<div style="left:11px;top:530.68px;width:1009px;height:0.8px;background:#e0e0e0;"></div>
<div style="left:109.6px;top:516.55px;width:0.9px;height:14.63px;background:#dedede;"></div>
<div style="left:247.85px;top:516.55px;width:0.9px;height:14.63px;background:#dedede;"></div>
<div style="left:316.6px;top:516.55px;width:0.9px;height:14.63px;background:#dedede;"></div>
<div style="left:369.6px;top:516.55px;width:0.9px;height:14.63px;background:#dedede;"></div>
<div style="left:438.85px;top:516.55px;width:0.9px;height:14.63px;background:#dedede;"></div>
<div style="left:516.6px;top:516.55px;width:0.9px;height:14.63px;background:#dedede;"></div>
<div style="left:592.6px;top:516.55px;width:0.9px;height:14.63px;background:#dedede;"></div>
<div style="left:669.1px;top:516.55px;width:0.9px;height:14.63px;background:#dedede;"></div>
<div style="left:745.6px;top:516.55px;width:0.9px;height:14.63px;background:#dedede;"></div>
<div style="left:822.6px;top:516.55px;width:0.9px;height:14.63px;background:#dedede;"></div>
<div style="left:899.35px;top:516.55px;width:0.9px;height:14.63px;background:#dedede;"></div>
<span class="t" style="top:517.57px;font-size:8.7px;line-height:12.18px;color:#1a1a1a;right:777.95px;letter-spacing:-0.41px;">2025.09.19 23:34:01</span>
<span class="t" style="top:517.57px;font-size:8.7px;line-height:12.18px;color:#1a1a1a;right:709.35px;letter-spacing:-0.41px;">buy</span>
<span class="t" style="top:517.57px;font-size:8.7px;line-height:12.18px;color:#1a1a1a;right:655.6px;letter-spacing:-0.41px;">0.03</span>
<span class="t" style="top:517.57px;font-size:8.7px;line-height:12.18px;color:#1a1a1a;right:586.85px;letter-spacing:-0.41px;">gold</span>
<span class="t" style="top:517.57px;font-size:8.7px;line-height:12.18px;color:#1a1a1a;right:509.1px;letter-spacing:-0.41px;">3684.77</span>
<span class="t" style="top:517.57px;font-size:8.7px;line-height:12.18px;color:#1a1a1a;right:433.1px;letter-spacing:-0.41px;">0.00</span>
<span class="t" style="top:517.57px;font-size:8.7px;line-height:12.18px;color:#1a1a1a;right:356.6px;letter-spacing:-0.41px;">0.00</span>
<span class="t" style="top:517.57px;font-size:8.7px;line-height:12.18px;color:#1a1a1a;right:280.1px;letter-spacing:-0.41px;">3685.10</span>
<span class="t" style="top:517.57px;font-size:8.7px;line-height:12.18px;color:#1a1a1a;right:203.1px;letter-spacing:-0.41px;">0</span>
<span class="t" style="top:517.57px;font-size:8.7px;line-height:12.18px;color:#1a1a1a;right:126.35px;letter-spacing:-0.41px;">-259</span>
<span class="t" style="top:517.57px;font-size:8.7px;line-height:12.18px;color:#1a1a1a;right:21.35px;letter-spacing:-0.41px;">146</span>
<span class="t" style="top:516.06px;font-size:11px;line-height:15.4px;color:#8e8e8e;font-weight:bold;left:1012.7px;transform:translateX(-50%);">×</span>
<svg style="left:12.5px;top:518.15px" width="12" height="12" viewBox="0 0 12 12"><path d="M1.6 0.8h5l2.3 2.3v7.4H1.6z" fill="#f4f4f4" stroke="#7c7c7c" stroke-width="0.8"/><path d="M6.6 0.8v2.3h2.3" fill="none" stroke="#6a6a6a" stroke-width="0.7"/><circle cx="8.7" cy="8.9" r="2.15" fill="#2a8ae6" stroke="#802010" stroke-width="0.3"/></svg>
<div style="left:27.2px;top:518.45px;width:36.8px;height:8.6px;background:#fefefe;border-radius:1.5px;"></div>
<div style="left:11px;top:531.18px;width:1009px;height:14px;background:#cfcfcf;"></div>
<svg style="left:13.6px;top:533.78px" width="9" height="9" viewBox="0 0 9 9"><rect x="0.4" y="0.4" width="8.2" height="8.2" fill="#fff" stroke="#8a8a8a" stroke-width="0.8"/><path d="M4.5 1.6L6.9 4H5.4V4.6H6.9L4.5 7.4 2.1 4.6H3.6V4H2.1z" fill="#e23b12"/></svg>
<span class="t" style="top:532.09px;font-size:8.7px;line-height:12.18px;color:#111;font-weight:bold;left:27.8px;letter-spacing:-0.316px;">残高: 1 003 194 JPY</span>
<span class="t" style="top:532.09px;font-size:8.7px;line-height:12.18px;color:#111;font-weight:bold;left:108px;letter-spacing:-0.133px;">有効証拠金: 714 588</span>
<span class="t" style="top:532.09px;font-size:8.7px;line-height:12.18px;color:#111;font-weight:bold;left:191.3px;letter-spacing:-0.125px;">必要証拠金: 36 251</span>
<span class="t" style="top:532.09px;font-size:8.7px;line-height:12.18px;color:#111;font-weight:bold;left:269.5px;letter-spacing:-0.025px;">余剰証拠金: 678 337</span>
<span class="t" style="top:532.09px;font-size:8.7px;line-height:12.18px;color:#111;font-weight:bold;left:353.8px;letter-spacing:-0.21px;">証拠金維持率: 1971.22%</span>
<span class="t" style="top:532.09px;font-size:8.7px;line-height:12.18px;color:#111;font-weight:bold;right:21.6px;letter-spacing:0.15px;margin-right:-0.15px;">-288 606</span>
<div style="left:10.9px;top:425px;width:0.9px;height:152px;background:#b8b8b8;"></div>
<div style="left:11px;top:576.6px;width:1009px;height:1.1px;background:#6e6e6e;"></div>
<div style="left:11px;top:577.7px;width:1009px;height:14px;background:#f0f0f0;"></div>
<div style="left:0px;top:592.8px;width:1024px;height:1.9px;background:#f7f9f6;"></div>
<div style="left:0px;top:594.7px;width:1024px;height:1px;background:#c2c2c2;"></div>
<div style="left:0px;top:595.7px;width:1024px;height:1.1px;background:#fbfbfb;"></div>
<div style="left:12.6px;top:576.8px;width:33.2px;height:14.6px;background:#fff;border:1px solid #444;border-top:none;border-radius:0 0 2px 2px"></div>
<span class="t" style="top:578.11px;font-size:8.7px;line-height:12.18px;color:#111;left:29.2px;transform:translateX(-50%);">取引</span>
<span class="t" style="top:578.18px;font-size:8.6px;line-height:12.04px;color:#777;left:53px;letter-spacing:-0.048px;">運用比率</span>
<span class="t" style="top:578.18px;font-size:8.6px;line-height:12.04px;color:#777;left:103.7px;letter-spacing:-0.398px;">口座履歴</span>
<span class="t" style="top:578.18px;font-size:8.6px;line-height:12.04px;color:#777;left:152.8px;"><span style="display:inline-block;width:23.94px;height:12.04px;vertical-align:top;letter-spacing:0"><span style="display:inline-block;transform:scaleX(0.696);transform-origin:0 50%">ニュース</span></span></span>
<span class="t" style="top:578.18px;font-size:8.6px;line-height:12.04px;color:#777;left:191.8px;"><span style="display:inline-block;width:24.70px;height:12.04px;vertical-align:top;letter-spacing:0"><span style="display:inline-block;transform:scaleX(0.718);transform-origin:0 50%">アラーム</span></span>設定</span>
<span class="t" style="top:578.18px;font-size:8.6px;line-height:12.04px;color:#777;left:249px;"><span style="display:inline-block;width:44.67px;height:12.04px;vertical-align:top;letter-spacing:0"><span style="display:inline-block;transform:scaleX(0.742);transform-origin:0 50%">メールボックス</span></span></span>
<span class="t" style="top:578.18px;font-size:8.6px;line-height:12.04px;color:#777;left:313.7px;"><span style="display:inline-block;width:30.01px;height:12.04px;vertical-align:top;letter-spacing:0"><span style="display:inline-block;transform:scaleX(0.698);transform-origin:0 50%">マーケット</span></span></span>
<span class="t" style="top:578.18px;font-size:8.6px;line-height:12.04px;color:#777;left:371.25px;letter-spacing:-0.602px;">記事</span>
<span class="t" style="top:578.18px;font-size:8.6px;line-height:12.04px;color:#777;left:408.4px;"><span style="display:inline-block;width:30.01px;height:12.04px;vertical-align:top;letter-spacing:0"><span style="display:inline-block;transform:scaleX(0.698);transform-origin:0 50%">ライブラリ</span></span></span>
<span class="t" style="top:578.18px;font-size:8.6px;line-height:12.04px;color:#777;left:453.75px;"><span style="display:inline-block;width:37.77px;height:12.04px;vertical-align:top;letter-spacing:0"><span style="display:inline-block;transform:scaleX(0.732);transform-origin:0 50%">エキスパート</span></span></span>
<span class="t" style="top:578.18px;font-size:8.6px;line-height:12.04px;color:#777;left:507.2px;letter-spacing:-0.148px;">操作履歴</span>
<div style="left:95.19999999999999px;top:579.6px;width:0.9px;height:9.6px;background:#666;"></div>
<div style="left:144.9px;top:579.6px;width:0.9px;height:9.6px;background:#666;"></div>
<div style="left:184.29999999999998px;top:579.6px;width:0.9px;height:9.6px;background:#666;"></div>
<div style="left:241.1px;top:579.6px;width:0.9px;height:9.6px;background:#666;"></div>
<div style="left:306.20000000000005px;top:579.6px;width:0.9px;height:9.6px;background:#666;"></div>
<div style="left:363.35px;top:579.6px;width:0.9px;height:9.6px;background:#666;"></div>
<div style="left:400.5px;top:579.6px;width:0.9px;height:9.6px;background:#666;"></div>
<div style="left:445.85px;top:579.6px;width:0.9px;height:9.6px;background:#666;"></div>
<div style="left:499.3px;top:579.6px;width:0.9px;height:9.6px;background:#666;"></div>
<div style="left:548.6px;top:579.6px;width:0.9px;height:9.6px;background:#666;"></div>
<span class="t" style="top:582.88px;font-size:5.6px;line-height:7.84px;color:#f01818;font-weight:bold;left:295.2px;">7</span>
<span class="t" style="top:582.88px;font-size:5.6px;line-height:7.84px;color:#f01818;font-weight:bold;left:346px;letter-spacing:0.119px;">105</span>
<span class="t" style="top:582.88px;font-size:5.6px;line-height:7.84px;color:#f01818;font-weight:bold;left:389.6px;">8</span>
<div style="left:0px;top:596.8px;width:1024px;height:15.7px;background:#f0f0f0;"></div>
<span class="t" style="top:598.81px;font-size:8.7px;line-height:12.18px;color:#111;left:1.6px;">F1<span style="display:inline-block;width:47.50px;height:12.18px;vertical-align:top;letter-spacing:0"><span style="display:inline-block;transform:scaleX(0.780);transform-origin:0 50%">キーでヘルプが</span></span>表示<span style="display:inline-block;width:27.14px;height:12.18px;vertical-align:top;letter-spacing:0"><span style="display:inline-block;transform:scaleX(0.780);transform-origin:0 50%">されます</span></span></span>
<span class="t" style="top:598.81px;font-size:8.7px;line-height:12.18px;color:#111;left:508.7px;letter-spacing:-0.076px;">Default</span>
<div style="left:503.6px;top:598px;width:0.9px;height:13px;background:#c4c4c4;"></div>
<div style="left:589.1px;top:598px;width:0.9px;height:13px;background:#c4c4c4;"></div>
<div style="left:661.6px;top:598px;width:0.9px;height:13px;background:#c4c4c4;"></div>
<div style="left:715.6px;top:598px;width:0.9px;height:13px;background:#c4c4c4;"></div>
<div style="left:766.6px;top:598px;width:0.9px;height:13px;background:#c4c4c4;"></div>
<div style="left:816.1px;top:598px;width:0.9px;height:13px;background:#c4c4c4;"></div>
<div style="left:866.9px;top:598px;width:0.9px;height:13px;background:#c4c4c4;"></div>
<div style="left:915.2px;top:598px;width:0.9px;height:13px;background:#c4c4c4;"></div>
<svg style="left:919.4px;top:599.6px" width="17" height="10" viewBox="0 0 17 10"><rect x="0.00" y="0" width="1.1" height="5.80" fill="#7a9a2a"/><rect x="0.00" y="5.80" width="1.1" height="4.20" fill="#2d5f9c"/><rect x="1.85" y="0" width="1.1" height="5.10" fill="#7a9a2a"/><rect x="1.85" y="5.10" width="1.1" height="4.90" fill="#2d5f9c"/><rect x="3.70" y="0" width="1.1" height="4.40" fill="#7a9a2a"/><rect x="3.70" y="4.40" width="1.1" height="5.60" fill="#2d5f9c"/><rect x="5.55" y="0" width="1.1" height="3.70" fill="#7a9a2a"/><rect x="5.55" y="3.70" width="1.1" height="6.30" fill="#2d5f9c"/><rect x="7.40" y="0" width="1.1" height="3.00" fill="#7a9a2a"/><rect x="7.40" y="3.00" width="1.1" height="7.00" fill="#2d5f9c"/><rect x="9.25" y="0" width="1.1" height="2.30" fill="#7a9a2a"/><rect x="9.25" y="2.30" width="1.1" height="7.70" fill="#2d5f9c"/><rect x="11.10" y="0" width="1.1" height="1.60" fill="#7a9a2a"/><rect x="11.10" y="1.60" width="1.1" height="8.40" fill="#2d5f9c"/><rect x="12.95" y="0" width="1.1" height="0.90" fill="#7a9a2a"/><rect x="12.95" y="0.90" width="1.1" height="9.10" fill="#2d5f9c"/><rect x="14.80" y="0" width="1.1" height="0.20" fill="#7a9a2a"/><rect x="14.80" y="0.20" width="1.1" height="9.80" fill="#2d5f9c"/></svg>
<span class="t" style="top:598.81px;font-size:8.7px;line-height:12.18px;color:#111;left:940px;letter-spacing:-0.309px;">567733/1798 kb</span>
<svg style="left:1011px;top:600px" width="12.4" height="12.6" viewBox="0 0 12.4 12.6"><path d="M1.6 12.6L12.2 2M4.200 12.6L12.2 4.600M6.800 12.6L12.2 7.200M9.400 12.6L12.2 9.800" stroke="#a4a4a4" stroke-width="0.8"/></svg>
<div style="left:0px;top:612.5px;width:1024px;height:1.5px;background:#071a3a;"></div>
<div style="left:1023.15px;top:1.3px;width:0.85px;height:611.2px;background:#4b5b72;"></div>
</div>
</body></html>
